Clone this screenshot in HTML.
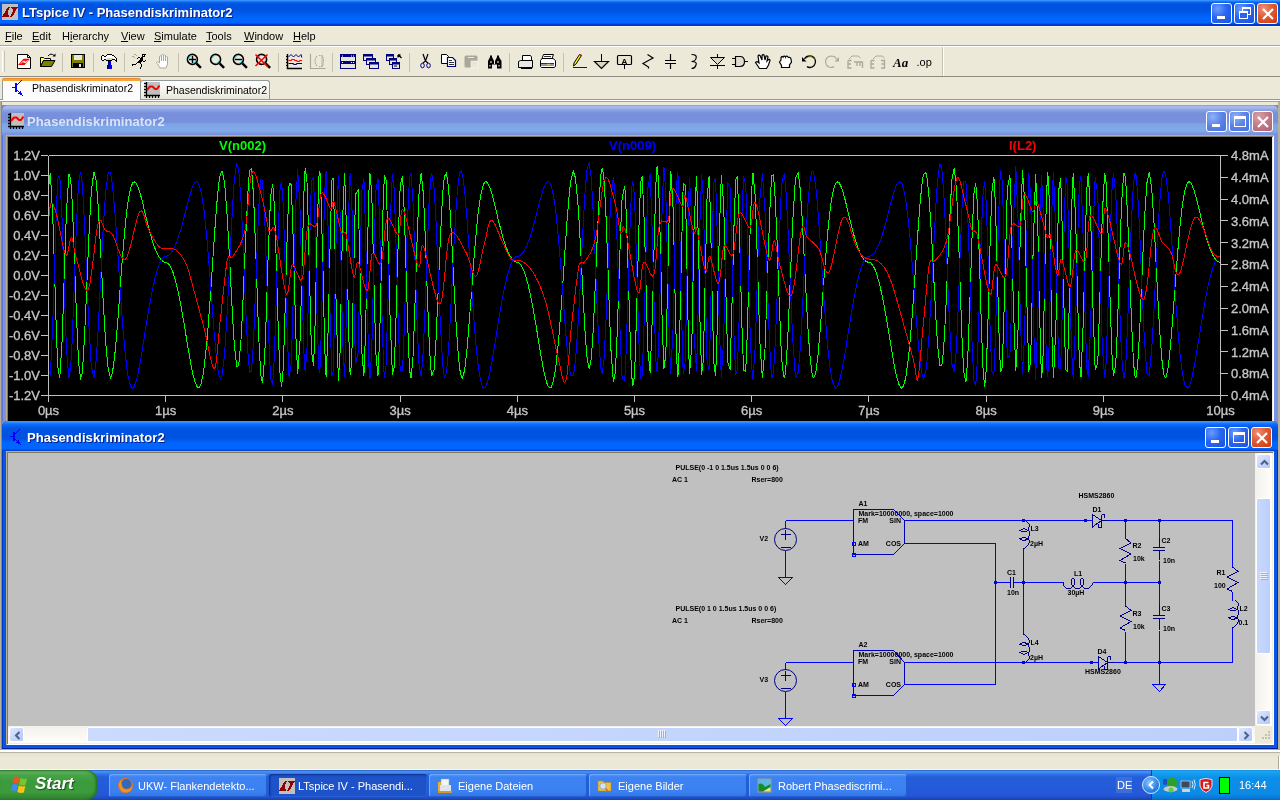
<!DOCTYPE html>
<html><head><meta charset="utf-8">
<style>
*{margin:0;padding:0;box-sizing:border-box}
html,body{width:1280px;height:800px;overflow:hidden;background:#ECE9D8;font-family:"Liberation Sans",sans-serif;position:relative}
body{will-change:transform}
.a{position:absolute}
#title{left:0;top:0;width:1280px;height:26px;background:linear-gradient(180deg,#4396ff 0px,#2a8aff 1px,#0a68f0 2px,#0053e0 4px,#0053e0 10px,#005cf0 14px,#0066ff 18px,#0066ff 23px,#0040d8 24px,#0033cc 25px)}
#title .t{left:22px;top:5px;color:#fff;font-weight:bold;font-size:13px;text-shadow:1px 1px 0 #0a1e80;white-space:nowrap}
.xb{width:21px;height:21px;border:1px solid #fff;border-radius:3px;background:radial-gradient(circle at 30% 25%,#6c9cff 0%,#2a66f0 45%,#1a50e0 100%)}
.xb.c{background:radial-gradient(circle at 30% 25%,#f09080 0%,#e05a30 45%,#c83a10 100%)}
#menu{left:0;top:26px;width:1280px;height:20px;background:#ECE9D8;border-top:1px solid #faf6e6}
#menu span{position:absolute;top:3px;font-size:11px;color:#000;white-space:nowrap}
#menu u{text-decoration:underline}
.sep1{left:0;top:45px;width:1280px;height:1px;background:#aca899}
.sep2{left:0;top:46px;width:1280px;height:1px;background:#fff}
#tb{left:0;top:47px;width:1280px;height:30px;background:#ECE9D8}
.tbsep{top:6px;width:1px;height:19px;background:#c5c2b2}
#tabs{left:0;top:77px;width:1280px;height:25px;background:#ECE9D8;border-top:1px solid #8c8a80}
.xbi{position:absolute;width:21px;height:21px;border:1px solid #fff;border-radius:3px;background:radial-gradient(circle at 30% 25%,#8fb0f8 0%,#5a82e8 50%,#4a70dc 100%)}
.xbi.c{background:radial-gradient(circle at 30% 25%,#d9a0a8 0%,#c07884 50%,#b06070 100%)}
.sbtn{position:absolute;width:15px;height:15px;border:1px solid #fff;border-radius:2px;background:linear-gradient(135deg,#e0e8fe,#c3d3fd 60%,#b4c8f8)}
.sthumb{position:absolute;border:1px solid #fff;border-radius:2px;background:linear-gradient(90deg,#cbdafd,#bdd0fb)}
.tbtn{position:absolute;top:4px;width:158px;height:23px;border-radius:3px;background:linear-gradient(180deg,#5a9af8 0px,#3d83f3 3px,#3a80f0 18px,#3472e0 23px);box-shadow:inset 1px 1px 0 #6ea8ff,inset -1px -1px 0 #2060d0}
.tbtn.act{background:#1e52c8;box-shadow:inset 1px 1px 2px #0d2e88,inset -1px -1px 0 #2a62d8}
.tt{left:29px;top:6px;font-size:11px;color:#fff;white-space:nowrap}
.mdi{left:0;top:102px;width:1280px;height:648px;background:#ECE9D8}
</style></head><body>

<!-- main title bar -->
<div id="title" class="a">
 <svg class="a" style="left:2px;top:4px" width="16" height="16" viewBox="0 0 16 16" shape-rendering="crispEdges"><rect width="16" height="16" fill="#c0c0c0"/><rect x="6" y="3" width="2" height="1" fill="#900000"/><rect x="9" y="3" width="7" height="1" fill="#900000"/><rect x="5" y="4" width="2" height="1" fill="#900000"/><rect x="10" y="4" width="5" height="1" fill="#900000"/><rect x="4" y="5" width="3" height="1" fill="#900000"/><rect x="11" y="5" width="3" height="1" fill="#900000"/><rect x="4" y="6" width="2" height="1" fill="#900000"/><rect x="11" y="6" width="3" height="1" fill="#900000"/><rect x="3" y="7" width="3" height="1" fill="#900000"/><rect x="11" y="7" width="2" height="1" fill="#900000"/><rect x="3" y="8" width="3" height="1" fill="#900000"/><rect x="10" y="8" width="3" height="1" fill="#900000"/><rect x="2" y="9" width="4" height="1" fill="#900000"/><rect x="10" y="9" width="2" height="1" fill="#900000"/><rect x="1" y="10" width="5" height="1" fill="#900000"/><rect x="9" y="10" width="3" height="1" fill="#900000"/><rect x="1" y="11" width="6" height="1" fill="#900000"/><rect x="9" y="11" width="2" height="1" fill="#900000"/><rect x="0" y="12" width="7" height="1" fill="#900000"/><rect x="8" y="12" width="2" height="1" fill="#900000"/></svg>
 <div class="a t">LTspice IV - Phasendiskriminator2</div>
 <div class="a xb" style="left:1211px;top:3px"><div class="a" style="left:5px;top:12px;width:8px;height:3px;background:#fff"></div></div>
 <div class="a xb" style="left:1234px;top:3px"><div class="a" style="left:7px;top:3px;width:9px;height:8px;border:1px solid #fff;border-top-width:2px"></div><div class="a" style="left:4px;top:7px;width:9px;height:8px;border:1px solid #fff;border-top-width:2px;background:#2a62ee"></div></div>
 <div class="a xb c" style="left:1257px;top:3px"><svg class="a" style="left:4px;top:4px" width="12" height="12"><path d="M1 1 L11 11 M11 1 L1 11" stroke="#fff" stroke-width="2.2"/></svg></div>
</div>

<div id="menu" class="a">
 <span style="left:5px"><u>F</u>ile</span>
 <span style="left:32px"><u>E</u>dit</span>
 <span style="left:62px">H<u>i</u>erarchy</span>
 <span style="left:121px"><u>V</u>iew</span>
 <span style="left:154px"><u>S</u>imulate</span>
 <span style="left:206px"><u>T</u>ools</span>
 <span style="left:244px"><u>W</u>indow</span>
 <span style="left:293px"><u>H</u>elp</span>
</div>
<div class="a sep1"></div><div class="a sep2"></div>


<div id="tb" class="a">
 <div class="a" style="left:2px;top:4px;width:3px;height:21px;border-left:1px solid #fff;border-right:1px solid #c5c2b2;background:#f2f0e6"></div>
 <div class="a tbsep" style="left:62px"></div>
 <div class="a tbsep" style="left:93px"></div>
 <div class="a tbsep" style="left:124px"></div>
 <div class="a tbsep" style="left:178px"></div>
 <div class="a tbsep" style="left:278px"></div>
 <div class="a tbsep" style="left:332px"></div>
 <div class="a tbsep" style="left:409px"></div>
 <div class="a tbsep" style="left:509px"></div>
 <div class="a tbsep" style="left:563px"></div>
 <div class="a" style="left:942px;top:0;width:2px;height:29px;border-left:1px solid #c5c2b2;border-right:1px solid #fff"></div>
 
</div>
<div class="a" style="left:0;top:76px;width:1280px;height:1px;background:#8e8c7e"></div>
<!--ICONS-->
<svg class="a" style="left:0;top:0" width="945" height="77" viewBox="0 0 945 77"><path d="M17.5 54.5 H27.5 L30.5 57.5 V68.5 H17.5 Z" fill="#fff" stroke="#000"/>
<path d="M27.5 54.5 V57.5 H30.5" fill="none" stroke="#000"/>
<path d="M18 65 L23.5 58.7 H30 L24.5 65 Z" fill="#f00"/>
<path d="M21 63.5 L23 61.3 H25.5 M23.5 62.3 H26 L27.5 60.3" stroke="#fff" stroke-width="1" fill="none"/>
<path d="M40.5 57.5 H43.5 L44.5 58.5 H50.5 V60.5 H43.5 L40.5 66.5 Z" fill="#ffff60" stroke="#000"/>
<path d="M40.5 66.5 L43.5 60.5 H55 L51.5 66.5 Z" fill="#808000" stroke="#000"/>
<path d="M48 56 Q51 52.5 54 55.5" fill="none" stroke="#000"/><path d="M52.5 56.5 H55.5 V53.5 Z" fill="#000"/>
<rect x="71.5" y="54.5" width="13" height="13" fill="#808000" stroke="#000"/>
<rect x="74" y="55" width="8" height="5" fill="#e8e8d8"/>
<rect x="73" y="63" width="10" height="5" fill="#000"/><rect x="79" y="64" width="2" height="3" fill="#e8e8d8"/>
<rect x="107" y="54" width="5" height="1" fill="#000"/>
<rect x="102" y="55" width="2" height="1" fill="#000"/>
<rect x="106" y="55" width="1" height="1" fill="#000"/>
<rect x="107" y="55" width="5" height="1" fill="#fff"/>
<rect x="112" y="55" width="2" height="1" fill="#000"/>
<rect x="101" y="56" width="1" height="1" fill="#000"/>
<rect x="102" y="56" width="2" height="1" fill="#fff"/>
<rect x="104" y="56" width="2" height="1" fill="#000"/>
<rect x="106" y="56" width="8" height="1" fill="#fff"/>
<rect x="114" y="56" width="1" height="1" fill="#000"/>
<rect x="101" y="57" width="1" height="1" fill="#000"/>
<rect x="102" y="57" width="13" height="1" fill="#fff"/>
<rect x="115" y="57" width="1" height="1" fill="#000"/>
<rect x="101" y="58" width="1" height="1" fill="#000"/>
<rect x="102" y="58" width="5" height="1" fill="#fff"/>
<rect x="107" y="58" width="6" height="1" fill="#d8d4c8"/>
<rect x="113" y="58" width="3" height="1" fill="#fff"/>
<rect x="116" y="58" width="1" height="1" fill="#000"/>
<rect x="101" y="59" width="1" height="1" fill="#000"/>
<rect x="102" y="59" width="2" height="1" fill="#fff"/>
<rect x="104" y="59" width="2" height="1" fill="#000"/>
<rect x="106" y="59" width="6" height="1" fill="#d8d4c8"/>
<rect x="112" y="59" width="3" height="1" fill="#000"/>
<rect x="115" y="59" width="1" height="1" fill="#fff"/>
<rect x="116" y="59" width="1" height="1" fill="#000"/>
<rect x="102" y="60" width="2" height="1" fill="#000"/>
<rect x="106" y="60" width="6" height="1" fill="#000"/>
<rect x="115" y="60" width="2" height="1" fill="#000"/>
<rect x="108" y="61" width="2" height="1" fill="#000080"/>
<rect x="110" y="61" width="1" height="1" fill="#0000ff"/>
<rect x="116" y="61" width="1" height="1" fill="#000"/>
<rect x="108" y="62" width="2" height="1" fill="#000080"/>
<rect x="110" y="62" width="1" height="1" fill="#0000ff"/>
<rect x="108" y="63" width="2" height="1" fill="#000080"/>
<rect x="110" y="63" width="1" height="1" fill="#0000ff"/>
<rect x="108" y="64" width="2" height="1" fill="#000080"/>
<rect x="110" y="64" width="1" height="1" fill="#0000ff"/>
<rect x="107" y="65" width="2" height="1" fill="#000080"/>
<rect x="109" y="65" width="3" height="1" fill="#0000ff"/>
<rect x="107" y="66" width="2" height="1" fill="#000080"/>
<rect x="109" y="66" width="3" height="1" fill="#0000ff"/>
<rect x="107" y="67" width="2" height="1" fill="#000080"/>
<rect x="109" y="67" width="3" height="1" fill="#0000ff"/>
<rect x="107" y="68" width="2" height="1" fill="#000080"/>
<rect x="109" y="68" width="3" height="1" fill="#0000ff"/>
<rect x="134" y="54" width="2" height="1" fill="#a8a498"/>
<rect x="142" y="54" width="4" height="1" fill="#000"/>
<rect x="136" y="55" width="1" height="1" fill="#a8a498"/>
<rect x="142" y="55" width="1" height="1" fill="#000"/>
<rect x="143" y="55" width="1" height="1" fill="#fff"/>
<rect x="144" y="55" width="1" height="1" fill="#000"/>
<rect x="132" y="56" width="2" height="1" fill="#a8a498"/>
<rect x="142" y="56" width="3" height="1" fill="#000"/>
<rect x="134" y="57" width="1" height="1" fill="#a8a498"/>
<rect x="138" y="57" width="2" height="1" fill="#000"/>
<rect x="141" y="57" width="2" height="1" fill="#000"/>
<rect x="137" y="58" width="1" height="1" fill="#000"/>
<rect x="140" y="58" width="3" height="1" fill="#000"/>
<rect x="140" y="59" width="3" height="1" fill="#000"/>
<rect x="139" y="60" width="4" height="1" fill="#000"/>
<rect x="145" y="60" width="1" height="1" fill="#000"/>
<rect x="138" y="61" width="4" height="1" fill="#000"/>
<rect x="143" y="61" width="2" height="1" fill="#000"/>
<rect x="137" y="62" width="4" height="1" fill="#000"/>
<rect x="136" y="63" width="1" height="1" fill="#000"/>
<rect x="140" y="63" width="1" height="1" fill="#000"/>
<rect x="132" y="64" width="4" height="1" fill="#000"/>
<rect x="141" y="64" width="1" height="1" fill="#000"/>
<rect x="132" y="65" width="1" height="1" fill="#000"/>
<rect x="141" y="65" width="1" height="1" fill="#000"/>
<rect x="141" y="66" width="1" height="1" fill="#000"/>
<rect x="140" y="67" width="1" height="1" fill="#000"/>
<rect x="140" y="68" width="1" height="1" fill="#000"/>
<path d="M160 68 L156.5 62.5 L157.5 61.5 L159.5 63 V56.5 Q160.5 55.5 161.5 56.5 V61 V55 Q162.5 54 163.5 55 V61 V55.5 Q164.5 54.5 165.5 55.5 V61 V57 Q166.5 56 167.5 57 V64 L166 68 Z" fill="#fff" stroke="#aca899"/>
<circle cx="192.4" cy="59.4" r="5" fill="none" stroke="#000" stroke-width="1.6"/>
<path d="M188.9 58.4 Q189.4 55.9 191.9 55.4 M195.9 60.4 Q195.4 62.9 192.9 63.4" stroke="#00e0ff" stroke-width="1" fill="none"/>
<path d="M196.4 63.4 L200.9 67.9" stroke="#000" stroke-width="2.4"/>
<path d="M189 59.5 H196 M192.5 56 V63" stroke="#000" stroke-width="1.4"/>
<circle cx="215.6" cy="59.4" r="5" fill="none" stroke="#000" stroke-width="1.6"/>
<path d="M212.1 58.4 Q212.6 55.9 215.1 55.4 M219.1 60.4 Q218.6 62.9 216.1 63.4" stroke="#00e0ff" stroke-width="1" fill="none"/>
<path d="M219.6 63.4 L224.1 67.9" stroke="#000" stroke-width="2.4"/>

<circle cx="238.4" cy="59.4" r="5" fill="none" stroke="#000" stroke-width="1.6"/>
<path d="M234.9 58.4 Q235.4 55.9 237.9 55.4 M241.9 60.4 Q241.4 62.9 238.9 63.4" stroke="#00e0ff" stroke-width="1" fill="none"/>
<path d="M242.4 63.4 L246.9 67.9" stroke="#000" stroke-width="2.4"/>
<path d="M235 59.5 H242" stroke="#000" stroke-width="1.4"/>
<circle cx="261.6" cy="59.4" r="5" fill="none" stroke="#000" stroke-width="1.6"/>
<path d="M258.1 58.4 Q258.6 55.9 261.1 55.4 M265.1 60.4 Q264.6 62.9 262.1 63.4" stroke="#00e0ff" stroke-width="1" fill="none"/>
<path d="M265.6 63.4 L270.1 67.9" stroke="#000" stroke-width="2.4"/>
<path d="M255.5 54.5 L268 67 M267.5 54.5 L255.5 66" stroke="#f00" stroke-width="1.6"/>
<path d="M287.5 54 V68.5 H302" fill="none" stroke="#000" stroke-width="1.5"/>
<path d="M286 56.5 H287 M286 59.5 H287 M286 62.5 H287 M286 65.5 H287 M290 68 V69 M293 68 V69 M296 68 V69 M299 68 V69" stroke="#000" stroke-width="1"/>
<path d="M288.5 57 L291 54.5 L293.5 57 L296 54.5 L298.5 57 L301 54.5 L301.8 57.5" fill="none" stroke="#000080" stroke-width="1"/>
<path d="M288.5 60.5 H291 L292 59.5 H294 L295 60.5 H296.5 L297.5 61.5 H299 L300 60.5 H302" fill="none" stroke="#f00" stroke-width="1.2"/>
<path d="M288.5 63.5 H293 L294 64.5 H296 L297 63.5 H302" fill="none" stroke="#000080" stroke-width="1.2"/>
<path d="M310.5 54 V68.5 H325.5" fill="none" stroke="#aca899" stroke-width="1.2"/>
<path d="M317 56 Q313 61 317 66 M319 55.5 H322 Q325 61 322 66.5 H319 M322 55.5 V66.5" fill="none" stroke="#aca899" stroke-width="1.2" stroke-dasharray="1.5 0.8"/>
<rect x="340.5" y="54.5" width="15" height="14" fill="#e8e6d8" stroke="#000080"/>
<rect x="341" y="55" width="14" height="2" fill="#000080"/><rect x="341" y="61" width="14" height="3" fill="#000080"/>
<path d="M342 56 h1 M351 56 h1 M353 56 h1 M342 62.5 h1 M351 62.5 h1 M353 62.5 h1" stroke="#fff" stroke-width="1"/>
<rect x="363.5" y="54.5" width="9" height="6" fill="#e8e6d8" stroke="#000080"/><rect x="363.5" y="54.5" width="9" height="2" fill="#000080"/>
<rect x="366.5" y="58.5" width="9" height="6" fill="#e8e6d8" stroke="#000080"/><rect x="366.5" y="58.5" width="9" height="2" fill="#000080"/>
<rect x="369.5" y="62.5" width="9" height="6" fill="#e8e6d8" stroke="#000080"/><rect x="369.5" y="62.5" width="9" height="2" fill="#000080"/>
<rect x="386.5" y="54.5" width="7" height="6" fill="#e8e6d8" stroke="#000080"/><rect x="386.5" y="54.5" width="7" height="2" fill="#000080"/>
<rect x="389.5" y="58.5" width="7" height="6" fill="#e8e6d8" stroke="#000080"/><rect x="389.5" y="58.5" width="7" height="2" fill="#000080"/>
<rect x="392.5" y="62.5" width="7" height="6" fill="#e8e6d8" stroke="#000080"/><rect x="392.5" y="62.5" width="7" height="2" fill="#000080"/>
<path d="M394 66 H397" stroke="#000" stroke-width="1"/><path d="M398.5 55 L401.5 58 M398 55 H400.5 M398 55 V57.5" stroke="#000" stroke-width="1.3"/>
<path d="M423 54 L425.5 61 M428 54 L425.5 61 L423 63 M425.5 61 L428 63" stroke="#000" stroke-width="1.2" fill="none"/>
<ellipse cx="422.5" cy="65.5" rx="1.8" ry="2.3" fill="none" stroke="#000080" stroke-width="1"/><ellipse cx="428.5" cy="65.5" rx="1.8" ry="2.3" fill="none" stroke="#000080" stroke-width="1"/>
<path d="M441.5 54.5 H446.5 L448.5 56.5 V63.5 H441.5 Z" fill="#fff" stroke="#000"/>
<path d="M447.5 57.5 H452.5 L455.5 60.5 V66.5 H447.5 Z" fill="#fff" stroke="#000080" stroke-width="1.2"/>
<path d="M449 60.5 H452 M449 62.5 H454 M449 64.5 H454" stroke="#000" stroke-width="0.8"/>
<rect x="464.5" y="55.5" width="13" height="12" rx="1.5" fill="#aca899"/><rect x="471" y="61" width="7" height="7" fill="#e8e6d8" stroke="#fff" stroke-width="0.5"/><rect x="468" y="57" width="6" height="1" fill="#e8e6d8"/>
<path d="M488 68.5 V61 L490 57 V55.5 H492 V57 L494 61 V64 H495 V61 L497 57 V55.5 H499 V57 L501.5 61 V68.5 H497 V64.5 H492 V68.5 Z" fill="#000"/>
<rect x="490.5" y="61" width="1" height="2" fill="#fff"/><rect x="497.5" y="61" width="1" height="2" fill="#fff"/><rect x="489.5" y="65" width="1" height="1.5" fill="#fff"/><rect x="498.5" y="65" width="1" height="1.5" fill="#fff"/>
<path d="M522.5 55.5 H530.5 L531.5 57 V60.5 H522.5 Z" fill="#fff" stroke="#000"/>
<path d="M518.5 61.5 L520.5 60.5 H532.5 V67.5 H518.5 Z" fill="#e8e8e8" stroke="#000"/><rect x="521" y="68" width="11" height="1" fill="#000"/>
<path d="M543.5 54.5 H553.5 L552 58.5 H542 Z" fill="#fff" stroke="#000"/><path d="M544 56.5 H551" stroke="#000" stroke-width="0.8"/>
<path d="M540.5 60.5 L542 58.5 H553 L555.5 60.5 V66.5 L554 67.5 H541.5 L540.5 66.5 Z" fill="#fff" stroke="#000"/><path d="M541 63.5 H554 M541 65 H554" stroke="#000" stroke-width="0.8"/><rect x="547" y="63.8" width="3" height="1" fill="#e0e000"/>
<path d="M573.5 66 L574 63 L579.5 54.5 L581.5 55.5 L576 64 Z" fill="#ffff00" stroke="#000" stroke-width="1"/><rect x="580" y="54.5" width="1.5" height="1.5" fill="#f00"/>
<path d="M573 67.5 H587" stroke="#0000ff" stroke-width="1"/>
<path d="M601.5 54 V61" stroke="#000" stroke-width="1"/><path d="M594.5 61.5 H608.5 L601.5 68.5 Z" fill="#d8d8c0" stroke="#000" stroke-width="1.2"/>
<rect x="617.5" y="55.5" width="14" height="9" rx="1" fill="#e8e6d0" stroke="#000" stroke-width="1.2"/><path d="M624.5 64.5 V69" stroke="#000"/>
<text x="624.5" y="63.5" font-family="Liberation Sans" font-size="8" font-weight="bold" text-anchor="middle">A</text>
<path d="M647.5 54.5 L653 58 L643 63.5 L648.5 67 V68.5" fill="none" stroke="#000" stroke-width="1.2"/>
<path d="M670.5 54 V60 M670.5 63.5 V69 M665 60.5 H676 M665 63.5 H676" stroke="#000" stroke-width="1.2"/>
<path d="M691.5 54.5 Q697.5 54.5 696 58.5 Q695.5 61 691.5 61.5 Q697.5 61.5 696 65 Q695 68.5 691.5 68.5" fill="none" stroke="#000" stroke-width="1.2"/>
<path d="M717.5 54 V57.5 M717.5 65 V69 M710 65.5 H725" stroke="#000" stroke-width="1"/><path d="M710.5 57.5 H724.5 L717.5 64.5 Z" fill="#d8d8c8" stroke="#000" stroke-width="1"/>
<path d="M735.5 56.5 H740 Q744.5 56.5 744.5 61.5 Q744.5 66.5 740 66.5 H735.5 Z" fill="#e0ddd0" stroke="#000" stroke-width="1.2"/><path d="M732 58.5 H735.5 M732 64.5 H735.5 M744.5 61.5 H748" stroke="#000" stroke-width="1"/>
<path d="M759.5 68.5 L755.5 62.5 L757 61.5 L759 63 L758 56 Q759 54.5 760 55.5 L762 60 V55.5 Q763 54 764 55 L765 60 L766 56 Q767.5 55.5 768 57 L767 61 L768.5 59.5 Q770 59 770 60.5 L768.5 65 L766.5 68.5 Z" fill="#fff" stroke="#000" stroke-width="1.2"/>
<path d="M781.5 67.5 V65.5 L779.5 62 L781 60 V57.5 Q782 56 783 57 V56.5 Q784.5 55.5 785.5 57 V56.5 Q787 55.5 788 57 L789 57.5 Q790.5 57 791 59 L791.5 62 L789.5 65 V67.5 Z" fill="#fff" stroke="#000" stroke-width="1.2"/>
<path d="M804.5 59 Q806 56 810 56 Q815 56.5 815.5 61.5 Q815 67 810 67.5 Q808 67.5 807 66.5" fill="none" stroke="#000" stroke-width="1.3"/><path d="M806.5 58 Q808 56.5 811 56.5 Q814 57.5 815 60" fill="none" stroke="#808000" stroke-width="1"/><path d="M802 57 V61.5 H806.5 Z" fill="#000"/>
<path d="M836.5 59 Q835 56 831 56 Q826 56.5 825.5 61.5 Q826 67 831 67.5 Q833 67.5 834 66.5" fill="none" stroke="#aca899" stroke-width="1.2"/><path d="M839 57 V61.5 H834.5 Z" fill="#aca899"/>
<path d="M849 59 L852 56 H858 L860.5 58" fill="none" stroke="#aca899"/><path d="M848 60.5 V68 H851.5 M848 64 H851 M848 60.5 H851.5 M854 62 H862.5 V68 M857 62 V66 M860 62 V66" fill="none" stroke="#aca899" stroke-width="1.3"/>
<path d="M873 59 L876 56 H882 L884.5 58" fill="none" stroke="#aca899"/><path d="M871 60.5 V68 H874.5 M871 64 H874 M871 60.5 H874.5 M881 60.5 H884.5 V68 H881 M881.5 64 H884.5" fill="none" stroke="#aca899" stroke-width="1.3"/>
<text x="893" y="66.8" font-family="Liberation Serif" font-size="13" font-weight="bold" font-style="italic">Aa</text>
<text x="916.5" y="66" font-family="Liberation Sans" font-size="11">.op</text></svg>
<!--/ICONS-->

<div id="tabs" class="a" style="border:none">
 
 <div class="a" style="left:140px;top:3px;width:130px;height:20px;border:1px solid #919b9c;border-bottom:none;border-radius:3px 3px 0 0;background:linear-gradient(#fff,#f0efe6 70%,#e6e4d8)"></div>
 <div class="a" style="left:2px;top:1px;width:139px;height:23px;border:1px solid #919b9c;border-bottom:none;border-top:none;border-radius:3px 3px 0 0;background:#fcfcfe"></div>
 <div class="a" style="left:2px;top:1px;width:139px;height:3px;background:#f5a635;border-radius:3px 3px 0 0;border-top:1px solid #e68b2c"></div>
 <div class="a" style="left:0;top:22px;width:1280px;height:1px;background:#919b9c"></div>
 <div class="a" style="left:3px;top:4px;width:137px;height:19px;background:#fcfcfe"></div>
 <div class="a" style="left:0;top:23px;width:1280px;height:1px;background:#fff"></div>
 <div class="a" style="left:0;top:24px;width:1280px;height:1px;background:#a0a0a0"></div>
 <svg class="a" style="left:12px;top:3px" width="11" height="16" shape-rendering="crispEdges"><rect x="9" y="0" width="1" height="1" fill="#0000ff"/><rect x="8" y="1" width="1" height="1" fill="#0000ff"/><rect x="7" y="2" width="1" height="1" fill="#0000ff"/><rect x="3" y="3" width="2" height="1" fill="#0000ff"/><rect x="6" y="3" width="1" height="1" fill="#0000ff"/><rect x="3" y="4" width="3" height="1" fill="#0000ff"/><rect x="3" y="5" width="2" height="1" fill="#0000ff"/><rect x="3" y="6" width="2" height="1" fill="#0000ff"/><rect x="0" y="7" width="5" height="1" fill="#0000ff"/><rect x="3" y="8" width="2" height="1" fill="#0000ff"/><rect x="3" y="9" width="2" height="1" fill="#0000ff"/><rect x="3" y="10" width="3" height="1" fill="#0000ff"/><rect x="3" y="11" width="2" height="1" fill="#0000ff"/><rect x="6" y="11" width="1" height="1" fill="#0000ff"/><rect x="8" y="11" width="1" height="1" fill="#0000ff"/><rect x="7" y="12" width="2" height="1" fill="#0000ff"/><rect x="6" y="13" width="4" height="1" fill="#0000ff"/><rect x="8" y="14" width="2" height="1" fill="#0000ff"/><rect x="10" y="15" width="1" height="1" fill="#0000ff"/></svg>
 <span class="a" style="left:32px;top:5px;font-size:10.5px;color:#000;white-space:nowrap">Phasendiskriminator2</span>
 <svg class="a" style="left:144px;top:5px" width="16" height="16" viewBox="0 0 16 16"><rect x="3" y="0" width="13" height="13" fill="#c0c0c0"/><path d="M2.5 0 V16 M0 13.5 H16 M0 1.5 H2.5 M0 4.5 H2.5 M0 7.5 H2.5 M0 10.5 H2.5 M5.5 13.5 V16 M8.5 13.5 V16 M11.5 13.5 V16 M14.5 13.5 V16" stroke="#000" stroke-width="1.3" fill="none"/><path d="M3 8 L6 4.5 H8.5 L11 7 H13 L15.5 3.5" stroke="#f00" stroke-width="2" fill="none" stroke-linejoin="round"/></svg>
 <span class="a" style="left:166px;top:7px;font-size:10.5px;color:#000;white-space:nowrap">Phasendiskriminator2</span>
</div>

<div class="a" style="left:0;top:105px;width:1280px;height:644px;background:#7f8aa8"></div>
<div class="a" style="left:0;top:102px;width:2px;height:648px;background:#b4b09c;border-right:1px solid #8c8876"></div>
<div class="a" style="left:1278px;top:102px;width:2px;height:648px;background:#b4b09c"></div>

<!-- plot window (inactive) -->
<div class="a" style="left:2px;top:105px;width:1276px;height:316px;background:#7b92e2;border-radius:6px 6px 0 0;border-left:1px solid #6070dc"></div>
<div class="a" style="left:2px;top:105px;width:1276px;height:30px;border-radius:6px 6px 0 0;background:linear-gradient(180deg,#6c8ce4 0px,#a4baec 1px,#a2b8ec 3px,#8aa2e2 5px,#7890dc 8px,#7890dc 17px,#7ea2e6 19px,#82aaea 26px,#7a98e2 28px,#7890e0 30px)"></div>
<svg class="a" style="left:8px;top:113px" width="16" height="16" viewBox="0 0 16 16"><rect x="3" y="0" width="13" height="13" fill="#c0c0c0"/><path d="M2.5 0 V16 M0 13.5 H16 M0 1.5 H2.5 M0 4.5 H2.5 M0 7.5 H2.5 M0 10.5 H2.5 M5.5 13.5 V16 M8.5 13.5 V16 M11.5 13.5 V16 M14.5 13.5 V16" stroke="#000" stroke-width="1.3" fill="none"/><path d="M3 8 L6 4.5 H8.5 L11 7 H13 L15.5 3.5" stroke="#f00" stroke-width="2" fill="none" stroke-linejoin="round"/></svg>
<span class="a" style="left:27px;top:114px;font-size:13px;font-weight:bold;color:#d8e4f8;white-space:nowrap;letter-spacing:0.1px">Phasendiskriminator2</span>
<div class="a xbi" style="left:1206px;top:111px"><div class="a" style="left:5px;top:12px;width:8px;height:3px;background:#fff"></div></div>
<div class="a xbi" style="left:1229px;top:111px"><div class="a" style="left:4px;top:4px;width:12px;height:11px;border:1px solid #fff;border-top-width:3px"></div></div>
<div class="a xbi c" style="left:1252px;top:111px"><svg class="a" style="left:4px;top:4px" width="12" height="12"><path d="M1 1 L11 11 M11 1 L1 11" stroke="#fff" stroke-width="2.2"/></svg></div>
<div class="a" style="left:6px;top:135px;width:1268px;height:290px;background:#fff;border-left:1px solid #b8b090;border-top:1px solid #b8b090"></div>
<div class="a" style="left:7px;top:136px;width:1266px;height:290px;background:#f0eee0;border-left:1px solid #807860;border-top:1px solid #807860"></div>
<div class="a" id="plot" style="left:8px;top:137px;width:1264px;height:290px;background:#000"></div>

<!-- schematic window (active) -->
<div class="a" style="left:2px;top:421px;width:1276px;height:328px;background:#0a54e8;border-radius:6px 6px 0 0;border-left:1px solid #0038c8;border-right:1px solid #0030b0;border-bottom:1px solid #002090"></div>
<div class="a" style="left:2px;top:421px;width:1276px;height:30px;border-radius:6px 6px 0 0;background:linear-gradient(180deg,#3d95ff 0px,#3d95ff 1px,#1a7cff 2px,#0a66f8 4px,#0058e8 7px,#0053e0 10px,#0053e0 18px,#005ef4 20px,#0066ff 22px,#0066ff 28px,#0048d8 29px,#0040c8 30px)"></div>
<svg class="a" style="left:10px;top:429px" width="11" height="16" shape-rendering="crispEdges"><rect x="9" y="0" width="1" height="1" fill="#0000ff"/><rect x="8" y="1" width="1" height="1" fill="#0000ff"/><rect x="7" y="2" width="1" height="1" fill="#0000ff"/><rect x="3" y="3" width="2" height="1" fill="#0000ff"/><rect x="6" y="3" width="1" height="1" fill="#0000ff"/><rect x="3" y="4" width="3" height="1" fill="#0000ff"/><rect x="3" y="5" width="2" height="1" fill="#0000ff"/><rect x="3" y="6" width="2" height="1" fill="#0000ff"/><rect x="0" y="7" width="5" height="1" fill="#0000ff"/><rect x="3" y="8" width="2" height="1" fill="#0000ff"/><rect x="3" y="9" width="2" height="1" fill="#0000ff"/><rect x="3" y="10" width="3" height="1" fill="#0000ff"/><rect x="3" y="11" width="2" height="1" fill="#0000ff"/><rect x="6" y="11" width="1" height="1" fill="#0000ff"/><rect x="8" y="11" width="1" height="1" fill="#0000ff"/><rect x="7" y="12" width="2" height="1" fill="#0000ff"/><rect x="6" y="13" width="4" height="1" fill="#0000ff"/><rect x="8" y="14" width="2" height="1" fill="#0000ff"/><rect x="10" y="15" width="1" height="1" fill="#0000ff"/></svg>
<span class="a" style="left:27px;top:430px;font-size:13px;font-weight:bold;color:#fff;text-shadow:1px 1px 0 #0a1e80;white-space:nowrap;letter-spacing:0.1px">Phasendiskriminator2</span>
<div class="a xb" style="left:1205px;top:427px"><div class="a" style="left:5px;top:12px;width:8px;height:3px;background:#fff"></div></div>
<div class="a xb" style="left:1228px;top:427px"><div class="a" style="left:4px;top:4px;width:12px;height:11px;border:1px solid #fff;border-top-width:3px"></div></div>
<div class="a xb c" style="left:1251px;top:427px"><svg class="a" style="left:4px;top:4px" width="12" height="12"><path d="M1 1 L11 11 M11 1 L1 11" stroke="#fff" stroke-width="2.2"/></svg></div>
<div class="a" style="left:6px;top:451px;width:1268px;height:294px;background:#fff;border-left:1px solid #b8b090;border-top:1px solid #b8b090"></div>
<div class="a" style="left:7px;top:452px;width:1266px;height:292px;background:#f1efe2;border-left:1px solid #807860;border-top:1px solid #807860"></div>
<div class="a" id="sch" style="left:8px;top:453px;width:1247px;height:273px;background:#c0c0c0"></div>
<!-- vscroll -->
<div class="a" style="left:1255px;top:453px;width:17px;height:273px;background:linear-gradient(90deg,#f3f1ec,#fefefb)"></div>
<div class="a sbtn" style="left:1256px;top:454px"><svg class="a" style="left:3px;top:4px" width="9" height="7"><path d="M1 5.5 L4.5 2 L8 5.5" stroke="#4d6185" stroke-width="2" fill="none"/></svg></div>
<div class="a sthumb" style="left:1256px;top:498px;width:15px;height:156px;background:linear-gradient(90deg,#c8d8fc,#bcd0fc)"></div>
<svg class="a" style="left:1260px;top:572px" width="8" height="8"><path d="M0 0.5 H7 M0 2.5 H7 M0 4.5 H7 M0 6.5 H7" stroke="#eef4fe" stroke-width="1"/><path d="M1 1.5 H8 M1 3.5 H8 M1 5.5 H8 M1 7.5 H8" stroke="#8cb0f8" stroke-width="1"/></svg>
<div class="a sbtn" style="left:1256px;top:710px"><svg class="a" style="left:3px;top:4px" width="9" height="7"><path d="M1 1.5 L4.5 5 L8 1.5" stroke="#4d6185" stroke-width="2" fill="none"/></svg></div>
<!-- hscroll -->
<div class="a" style="left:8px;top:726px;width:1247px;height:17px;background:linear-gradient(180deg,#f3f1ec,#fefefb)"></div>
<div class="a sbtn" style="left:9px;top:727px"><svg class="a" style="left:4px;top:3px" width="7" height="9"><path d="M5.5 1 L2 4.5 L5.5 8" stroke="#4d6185" stroke-width="2" fill="none"/></svg></div>
<div class="a sthumb" style="left:87px;top:727px;width:1151px;height:15px"></div>
<svg class="a" style="left:658px;top:730px" width="8" height="9"><path d="M0.5 0 V7 M2.5 0 V7 M4.5 0 V7 M6.5 0 V7" stroke="#eef4fe" stroke-width="1"/><path d="M1.5 1 V8 M3.5 1 V8 M5.5 1 V8 M7.5 1 V8" stroke="#8cb0f8" stroke-width="1"/></svg>
<div class="a sbtn" style="left:1238px;top:727px"><svg class="a" style="left:4px;top:3px" width="7" height="9"><path d="M1.5 1 L5 4.5 L1.5 8" stroke="#4d6185" stroke-width="2" fill="none"/></svg></div>
<div class="a" style="left:1255px;top:726px;width:17px;height:17px;background:#ece9d8"></div>
<svg class="a" style="left:1259px;top:730px" width="12" height="12"><path d="M9 1h2v2h-2zM6 4h2v2h-2zM9 4h2v2h-2zM3 7h2v2h-2zM6 7h2v2h-2zM9 7h2v2h-2z" fill="#c5c2b2"/></svg>

<!-- status bar -->
<div class="a" style="left:0;top:749px;width:1280px;height:1px;background:#aca899"></div>
<div class="a" style="left:0;top:750px;width:1280px;height:2px;background:#fff"></div>
<div class="a" style="left:0;top:752px;width:1280px;height:1px;background:#b8b4a2"></div>
<div class="a" style="left:0;top:753px;width:1280px;height:16px;background:linear-gradient(180deg,#e6e3d4,#ece9d8 40%,#ebe8d6)"></div>
<div class="a" style="left:0;top:769px;width:1280px;height:1px;background:#faf6e8"></div>
<div class="a" style="left:1278px;top:756px;width:1px;height:13px;background:#aca899"></div>
<div class="a" style="left:1279px;top:756px;width:1px;height:13px;background:#fff"></div>

<!-- taskbar -->
<div class="a" id="task" style="left:0;top:770px;width:1280px;height:30px;background:linear-gradient(180deg,#1f4fc4 0px,#3d8aeb 1px,#4a92f0 2px,#2f74e8 4px,#245edb 7px,#2458d8 25px,#1e4cc8 28px,#1941a5 30px)">
 <div class="a" style="left:0;top:0;width:98px;height:30px;border-radius:0 12px 12px 0;background:linear-gradient(180deg,#3c8a3c 0px,#5fb05f 2px,#47a547 5px,#3b9a3b 12px,#3c9c3c 22px,#2f7f2f 30px);box-shadow:inset -2px 0 3px #236b23"></div>
 <svg class="a" style="left:10px;top:6px" width="20" height="18" viewBox="0 0 20 18">
  <path d="M4 1 Q6.5 0 9.5 1.5 L8 8 Q5 6.5 2.5 7.5 Z" fill="#f0541c"/>
  <path d="M10.5 2 Q13.5 3.5 17 2.5 L15.5 9 Q12.5 10 9 8.5 Z" fill="#7cc42c"/>
  <path d="M2.3 8.5 Q5 7.5 7.8 9 L6.3 15.5 Q3.5 14 1 15 Z" fill="#3f8cf0"/>
  <path d="M8.8 9.5 Q12 11 15.3 10 L13.8 16.5 Q10.5 17.5 7.3 16 Z" fill="#fcc414"/>
 </svg>
 <div class="a" style="left:35px;top:4px;font-size:17px;font-weight:bold;font-style:italic;color:#fff;text-shadow:1px 1px 1px #1a4a1a;white-space:nowrap">Start</div>
 <div class="a tbtn" style="left:109px"><svg class="a" style="left:8px;top:3px" width="17" height="17" viewBox="0 0 17 17"><circle cx="8.5" cy="8.5" r="7.5" fill="#e8731c"/><circle cx="9.5" cy="7" r="5" fill="#2f6bb8"/><path d="M2 9 Q3 15 9 15.5 Q15 15 15.5 9 Q13 13 9 12.5 Q5 12 4.5 7 Q3.5 5 5 2.5 Q1.5 5 2 9Z" fill="#f39020"/></svg><span class="a tt">UKW- Flankendetekto...</span></div>
 <div class="a tbtn act" style="left:269px"><svg class="a" style="left:10px;top:4px" width="16" height="16" viewBox="0 0 16 16" shape-rendering="crispEdges"><rect width="16" height="16" fill="#c0c0c0"/><rect x="6" y="3" width="2" height="1" fill="#900000"/><rect x="9" y="3" width="7" height="1" fill="#900000"/><rect x="5" y="4" width="2" height="1" fill="#900000"/><rect x="10" y="4" width="5" height="1" fill="#900000"/><rect x="4" y="5" width="3" height="1" fill="#900000"/><rect x="11" y="5" width="3" height="1" fill="#900000"/><rect x="4" y="6" width="2" height="1" fill="#900000"/><rect x="11" y="6" width="3" height="1" fill="#900000"/><rect x="3" y="7" width="3" height="1" fill="#900000"/><rect x="11" y="7" width="2" height="1" fill="#900000"/><rect x="3" y="8" width="3" height="1" fill="#900000"/><rect x="10" y="8" width="3" height="1" fill="#900000"/><rect x="2" y="9" width="4" height="1" fill="#900000"/><rect x="10" y="9" width="2" height="1" fill="#900000"/><rect x="1" y="10" width="5" height="1" fill="#900000"/><rect x="9" y="10" width="3" height="1" fill="#900000"/><rect x="1" y="11" width="6" height="1" fill="#900000"/><rect x="9" y="11" width="2" height="1" fill="#900000"/><rect x="0" y="12" width="7" height="1" fill="#900000"/><rect x="8" y="12" width="2" height="1" fill="#900000"/></svg><span class="a tt" style="left:29px">LTspice IV - Phasendi...</span></div>
 <div class="a tbtn" style="left:429px"><svg class="a" style="left:8px;top:4px" width="16" height="16" viewBox="0 0 16 16"><path d="M1 4 H5 V14 H1 Z" fill="#e8b030"/><rect x="4" y="1" width="8" height="7" fill="#f4f4f4" stroke="#8aa" stroke-width="0.5"/><rect x="3" y="7" width="11" height="6" fill="#dde4ee"/><path d="M1 13 H15 V15 H1 Z" fill="#d89820"/></svg><span class="a tt">Eigene Dateien</span></div>
 <div class="a tbtn" style="left:589px"><svg class="a" style="left:8px;top:4px" width="16" height="16" viewBox="0 0 16 16"><path d="M1 3 H6 L7 4.5 H14 V13 H1 Z" fill="#f0c040" stroke="#b88a20" stroke-width="0.6"/><circle cx="6" cy="8" r="3.2" fill="#c8e8f8" stroke="#88a" stroke-width="0.6"/><path d="M8.5 10.5 L11 13" stroke="#c87040" stroke-width="1.5"/></svg><span class="a tt">Eigene Bilder</span></div>
 <div class="a tbtn" style="left:749px"><svg class="a" style="left:8px;top:4px" width="16" height="16" viewBox="0 0 16 16"><rect x="0.5" y="0.5" width="14" height="14" fill="#a89888"/><rect x="1.5" y="1.5" width="12" height="12" fill="#58b8e8"/><path d="M1.5 6 Q5 4 8 9 L13.5 6 V13.5 H1.5Z" fill="#1a8a2a"/><path d="M6 13.5 L13.5 9 V13.5Z" fill="#e8e890"/></svg><span class="a tt">Robert Phasediscrimi...</span></div>
 <div class="a" style="left:1116px;top:7px;width:16px;height:16px;background:#3a6ed8"></div>
 <span class="a" style="left:1117px;top:9px;font-size:11px;color:#fff">DE</span>
 <div class="a" style="left:1151px;top:0;width:129px;height:30px;background:linear-gradient(180deg,#1d7de0 0px,#18aaf0 1px,#14a0ee 3px,#0d8ee8 8px,#0b8be6 24px,#0a78d8 28px,#0964c8 30px);border-left:1px solid #1042af"></div>
 <div class="a" style="left:1142px;top:6px;width:18px;height:18px;border-radius:50%;background:radial-gradient(circle at 40% 35%,#8cc8ff,#2a80e8 60%,#1a5ec0);border:1px solid #d8e8ff"></div>
 <svg class="a" style="left:1146px;top:10px" width="10" height="10"><path d="M7 1.5 L3.5 5 L7 8.5" stroke="#fff" stroke-width="2" fill="none"/></svg>
 <svg class="a" style="left:1161px;top:7px" width="18" height="17" viewBox="0 0 18 17"><circle cx="11" cy="6" r="5.5" fill="#2ca02c"/><path d="M2 2 H6 V7 Q4 9 2 7 Z" fill="#2050c0"/><ellipse cx="9.5" cy="12" rx="7" ry="3" fill="#c8c8c8"/><circle cx="10" cy="13" r="2.5" fill="#5ad040"/></svg>
 <svg class="a" style="left:1180px;top:8px" width="17" height="16" viewBox="0 0 17 16"><rect x="1" y="3" width="9" height="7" fill="#404858" stroke="#c8c8d0" stroke-width="0.8"/><rect x="2" y="11" width="8" height="3" fill="#d0d0d8"/><path d="M12 3 Q14 6.5 12 10 M14 1.5 Q16.5 6.5 14 11.5" stroke="#e8e8f0" stroke-width="1" fill="none"/></svg>
 <svg class="a" style="left:1199px;top:8px" width="14" height="15" viewBox="0 0 14 15"><path d="M1 1.5 Q7 -0.5 13 1.5 V8 Q12 12.5 7 14.5 Q2 12.5 1 8 Z" fill="#d81818" stroke="#fff" stroke-width="0.8"/><path d="M9.5 4.5 H5 V10 H9.5 V7.5 H7.5" stroke="#fff" stroke-width="1.6" fill="none"/></svg>
 <div class="a" style="left:1219px;top:7px;width:11px;height:17px;background:#00ff00;border:1px solid #000"></div>
 <span class="a" style="left:1239px;top:9px;font-size:11px;color:#fff;white-space:nowrap">16:44</span>
</div>
<!--SCH-->
<svg class="a" style="left:0;top:0" width="1280" height="800" viewBox="0 0 1280 800">
<defs><clipPath id="sc"><rect x="8" y="453" width="1247" height="273"/></clipPath></defs>
<g clip-path="url(#sc)">
<g fill="none" stroke-width="1" shape-rendering="crispEdges">
<path d="M853.5 509.5 H893.5 L904.5 520.5 V543.5 L893.5 554.5 H853.5 Z" stroke="#0000c0"/>
<rect x="852.5" y="542.5" width="3" height="3" fill="none" stroke="#0000ff" shape-rendering="auto" stroke-width="1"/>
<rect x="852.5" y="553.5" width="3" height="3" fill="none" stroke="#0000ff" shape-rendering="auto" stroke-width="1"/>
<path d="M785.5 520.5 L853.5 520.5" stroke="#0000ff"/>
<path d="M785.5 520.5 L785.5 528.5" stroke="#0000ff"/>
<circle cx="785.5" cy="539.5" r="11" stroke="#000080" fill="none" shape-rendering="auto"/>
<path d="M780.5 534.5 H790.5 M785.5 529.5 V539.5 M780.5 547.5 H790.5" stroke="#000080" />
<path d="M785.5 550.5 L785.5 577.5" stroke="#0000ff"/>
<path d="M778.5 577.5 H792.5 L785.5 584.5 Z" stroke="#0000ff" fill="none"/>
<path d="M853.5 650.5 H893.5 L904.5 662.5 V684.5 L893.5 695.5 H853.5 Z" stroke="#0000c0"/>
<rect x="852.5" y="683.5" width="3" height="3" fill="none" stroke="#0000ff" shape-rendering="auto" stroke-width="1"/>
<rect x="852.5" y="694.5" width="3" height="3" fill="none" stroke="#0000ff" shape-rendering="auto" stroke-width="1"/>
<path d="M785.5 662.5 L853.5 662.5" stroke="#0000ff"/>
<path d="M785.5 662.5 L785.5 669.5" stroke="#0000ff"/>
<circle cx="785.5" cy="680.5" r="11" stroke="#000080" fill="none" shape-rendering="auto"/>
<path d="M780.5 675.5 H790.5 M785.5 670.5 V680.5 M780.5 688.5 H790.5" stroke="#000080" />
<path d="M785.5 691.5 L785.5 718.5" stroke="#0000ff"/>
<path d="M778.5 718.5 H792.5 L785.5 725.5 Z" stroke="#0000ff" fill="none"/>
<path d="M904.5 520.5 L1092.5 520.5" stroke="#0000ff"/>
<path d="M1107.5 520.5 L1232.5 520.5 L1232.5 567.5" stroke="#0000ff"/>
<path d="M904.5 543.5 L995.5 543.5 L995.5 684.5 L904.5 684.5" stroke="#0000ff"/>
<path d="M995.5 582.5 L1010.5 582.5" stroke="#0000ff"/>
<path d="M1013.5 582.5 L1063.5 582.5" stroke="#0000ff"/>
<path d="M1092.5 582.5 L1159.5 582.5" stroke="#0000ff"/>
<path d="M1023.5 548.5 L1023.5 633.5" stroke="#0000ff"/>
<path d="M904.5 662.5 L1098.5 662.5" stroke="#0000ff"/>
<path d="M1106.5 662.5 L1232.5 662.5 L1232.5 627.5" stroke="#0000ff"/>
<path d="M1232.5 591.5 L1232.5 600.5" stroke="#0000ff"/>
<path d="M1125.5 520.5 L1125.5 538.5" stroke="#0000ff"/>
<path d="M1125.5 563.5 L1125.5 606.5" stroke="#0000ff"/>
<path d="M1125.5 631.5 L1125.5 662.5" stroke="#0000ff"/>
<path d="M1159.5 520.5 L1159.5 538.5" stroke="#0000ff"/>
<path d="M1159.5 560.5 L1159.5 604.5" stroke="#0000ff"/>
<path d="M1159.5 630.5 L1159.5 684.5" stroke="#0000ff"/>
<path d="M1152.5 684.5 H1165.5 L1159.5 691.5 Z" stroke="#0000ff" fill="none"/>
<rect x="1022" y="519" width="3" height="3" fill="#0000ff" stroke="none"/>
<rect x="1084" y="519" width="3" height="3" fill="#0000ff" stroke="none"/>
<rect x="1124" y="519" width="3" height="3" fill="#0000ff" stroke="none"/>
<rect x="1158" y="519" width="3" height="3" fill="#0000ff" stroke="none"/>
<rect x="994" y="581" width="3" height="3" fill="#0000ff" stroke="none"/>
<rect x="1022" y="581" width="3" height="3" fill="#0000ff" stroke="none"/>
<rect x="1124" y="581" width="3" height="3" fill="#0000ff" stroke="none"/>
<rect x="1158" y="581" width="3" height="3" fill="#0000ff" stroke="none"/>
<rect x="1022" y="661" width="3" height="3" fill="#0000ff" stroke="none"/>
<rect x="1090" y="661" width="3" height="3" fill="#0000ff" stroke="none"/>
<rect x="1124" y="661" width="3" height="3" fill="#0000ff" stroke="none"/>
<rect x="1158" y="661" width="3" height="3" fill="#0000ff" stroke="none"/>
<path d="M1159.5 538 V547.5 M1153 547.5 H1165 M1153 550.5 H1165 M1159.5 550.5 V560" stroke="#000080" />
<path d="M1159.5 604 V615.5 M1153 615.5 H1165 M1153 618.5 H1165 M1159.5 618.5 V630" stroke="#000080" />
<path d="M1010.5 577 V588 M1013.5 577 V588" stroke="#000080" />
<path d="M1125.5 538.5 L1131.0 543.0 L1120.0 548.5 L1131.0 554.0 L1120.0 560.5 L1125.5 563.0" stroke="#000080" fill="none"/>
<path d="M1125.5 606 L1131.0 610.5 L1120.0 616 L1131.0 621.5 L1120.0 628 L1125.5 630.5" stroke="#000080" fill="none"/>
<path d="M1232.5 567 L1238.0 571.5 L1227.0 577 L1238.0 582.5 L1227.0 589 L1232.5 591.5" stroke="#000080" fill="none"/>
<rect x="1026" y="521" width="1" height="1" fill="#000080" stroke="none"/>
<rect x="1027" y="522" width="1" height="1" fill="#000080" stroke="none"/>
<rect x="1028" y="523" width="1" height="1" fill="#000080" stroke="none"/>
<rect x="1029" y="524" width="1" height="1" fill="#000080" stroke="none"/>
<rect x="1029" y="525" width="1" height="1" fill="#000080" stroke="none"/>
<rect x="1029" y="526" width="1" height="1" fill="#000080" stroke="none"/>
<rect x="1028" y="527" width="1" height="1" fill="#000080" stroke="none"/>
<rect x="1023" y="528" width="2" height="1" fill="#000080" stroke="none"/>
<rect x="1028" y="528" width="1" height="1" fill="#000080" stroke="none"/>
<rect x="1021" y="529" width="2" height="1" fill="#000080" stroke="none"/>
<rect x="1025" y="529" width="2" height="1" fill="#000080" stroke="none"/>
<rect x="1028" y="529" width="1" height="1" fill="#000080" stroke="none"/>
<rect x="1019" y="530" width="2" height="1" fill="#000080" stroke="none"/>
<rect x="1027" y="530" width="2" height="1" fill="#000080" stroke="none"/>
<rect x="1021" y="531" width="6" height="1" fill="#000080" stroke="none"/>
<rect x="1029" y="531" width="1" height="1" fill="#000080" stroke="none"/>
<rect x="1029" y="532" width="1" height="1" fill="#000080" stroke="none"/>
<rect x="1029" y="533" width="1" height="1" fill="#000080" stroke="none"/>
<rect x="1029" y="534" width="1" height="1" fill="#000080" stroke="none"/>
<rect x="1029" y="535" width="1" height="1" fill="#000080" stroke="none"/>
<rect x="1028" y="536" width="1" height="1" fill="#000080" stroke="none"/>
<rect x="1022" y="537" width="4" height="1" fill="#000080" stroke="none"/>
<rect x="1028" y="537" width="1" height="1" fill="#000080" stroke="none"/>
<rect x="1019" y="538" width="3" height="1" fill="#000080" stroke="none"/>
<rect x="1026" y="538" width="3" height="1" fill="#000080" stroke="none"/>
<rect x="1020" y="539" width="2" height="1" fill="#000080" stroke="none"/>
<rect x="1025" y="539" width="4" height="1" fill="#000080" stroke="none"/>
<rect x="1022" y="540" width="4" height="1" fill="#000080" stroke="none"/>
<rect x="1029" y="540" width="1" height="1" fill="#000080" stroke="none"/>
<rect x="1029" y="541" width="1" height="1" fill="#000080" stroke="none"/>
<rect x="1029" y="542" width="1" height="1" fill="#000080" stroke="none"/>
<rect x="1028" y="543" width="1" height="1" fill="#000080" stroke="none"/>
<rect x="1028" y="544" width="1" height="1" fill="#000080" stroke="none"/>
<rect x="1027" y="545" width="1" height="1" fill="#000080" stroke="none"/>
<rect x="1026" y="546" width="1" height="1" fill="#000080" stroke="none"/>
<rect x="1025" y="547" width="1" height="1" fill="#000080" stroke="none"/>
<rect x="1023" y="548" width="2" height="1" fill="#000080" stroke="none"/>
<rect x="1023" y="634" width="2" height="1" fill="#000080" stroke="none"/>
<rect x="1025" y="635" width="1" height="1" fill="#000080" stroke="none"/>
<rect x="1026" y="636" width="1" height="1" fill="#000080" stroke="none"/>
<rect x="1027" y="637" width="1" height="1" fill="#000080" stroke="none"/>
<rect x="1028" y="638" width="1" height="1" fill="#000080" stroke="none"/>
<rect x="1028" y="639" width="1" height="1" fill="#000080" stroke="none"/>
<rect x="1029" y="640" width="1" height="1" fill="#000080" stroke="none"/>
<rect x="1029" y="641" width="1" height="1" fill="#000080" stroke="none"/>
<rect x="1022" y="642" width="4" height="1" fill="#000080" stroke="none"/>
<rect x="1029" y="642" width="1" height="1" fill="#000080" stroke="none"/>
<rect x="1020" y="643" width="2" height="1" fill="#000080" stroke="none"/>
<rect x="1025" y="643" width="4" height="1" fill="#000080" stroke="none"/>
<rect x="1019" y="644" width="3" height="1" fill="#000080" stroke="none"/>
<rect x="1026" y="644" width="3" height="1" fill="#000080" stroke="none"/>
<rect x="1022" y="645" width="4" height="1" fill="#000080" stroke="none"/>
<rect x="1028" y="645" width="1" height="1" fill="#000080" stroke="none"/>
<rect x="1028" y="646" width="1" height="1" fill="#000080" stroke="none"/>
<rect x="1029" y="647" width="1" height="1" fill="#000080" stroke="none"/>
<rect x="1029" y="648" width="1" height="1" fill="#000080" stroke="none"/>
<rect x="1029" y="649" width="1" height="1" fill="#000080" stroke="none"/>
<rect x="1029" y="650" width="1" height="1" fill="#000080" stroke="none"/>
<rect x="1021" y="651" width="6" height="1" fill="#000080" stroke="none"/>
<rect x="1029" y="651" width="1" height="1" fill="#000080" stroke="none"/>
<rect x="1019" y="652" width="2" height="1" fill="#000080" stroke="none"/>
<rect x="1027" y="652" width="2" height="1" fill="#000080" stroke="none"/>
<rect x="1021" y="653" width="2" height="1" fill="#000080" stroke="none"/>
<rect x="1025" y="653" width="2" height="1" fill="#000080" stroke="none"/>
<rect x="1028" y="653" width="1" height="1" fill="#000080" stroke="none"/>
<rect x="1023" y="654" width="2" height="1" fill="#000080" stroke="none"/>
<rect x="1028" y="654" width="1" height="1" fill="#000080" stroke="none"/>
<rect x="1028" y="655" width="1" height="1" fill="#000080" stroke="none"/>
<rect x="1029" y="656" width="1" height="1" fill="#000080" stroke="none"/>
<rect x="1029" y="657" width="1" height="1" fill="#000080" stroke="none"/>
<rect x="1029" y="658" width="1" height="1" fill="#000080" stroke="none"/>
<rect x="1028" y="659" width="1" height="1" fill="#000080" stroke="none"/>
<rect x="1027" y="660" width="1" height="1" fill="#000080" stroke="none"/>
<rect x="1026" y="661" width="1" height="1" fill="#000080" stroke="none"/>
<rect x="1235" y="600" width="1" height="1" fill="#000080" stroke="none"/>
<rect x="1236" y="601" width="1" height="1" fill="#000080" stroke="none"/>
<rect x="1237" y="602" width="1" height="1" fill="#000080" stroke="none"/>
<rect x="1238" y="603" width="1" height="1" fill="#000080" stroke="none"/>
<rect x="1238" y="604" width="1" height="1" fill="#000080" stroke="none"/>
<rect x="1238" y="605" width="1" height="1" fill="#000080" stroke="none"/>
<rect x="1237" y="606" width="1" height="1" fill="#000080" stroke="none"/>
<rect x="1232" y="607" width="2" height="1" fill="#000080" stroke="none"/>
<rect x="1237" y="607" width="1" height="1" fill="#000080" stroke="none"/>
<rect x="1230" y="608" width="2" height="1" fill="#000080" stroke="none"/>
<rect x="1234" y="608" width="2" height="1" fill="#000080" stroke="none"/>
<rect x="1237" y="608" width="1" height="1" fill="#000080" stroke="none"/>
<rect x="1228" y="609" width="2" height="1" fill="#000080" stroke="none"/>
<rect x="1236" y="609" width="2" height="1" fill="#000080" stroke="none"/>
<rect x="1230" y="610" width="6" height="1" fill="#000080" stroke="none"/>
<rect x="1238" y="610" width="1" height="1" fill="#000080" stroke="none"/>
<rect x="1238" y="611" width="1" height="1" fill="#000080" stroke="none"/>
<rect x="1238" y="612" width="1" height="1" fill="#000080" stroke="none"/>
<rect x="1238" y="613" width="1" height="1" fill="#000080" stroke="none"/>
<rect x="1238" y="614" width="1" height="1" fill="#000080" stroke="none"/>
<rect x="1237" y="615" width="1" height="1" fill="#000080" stroke="none"/>
<rect x="1231" y="616" width="4" height="1" fill="#000080" stroke="none"/>
<rect x="1237" y="616" width="1" height="1" fill="#000080" stroke="none"/>
<rect x="1228" y="617" width="3" height="1" fill="#000080" stroke="none"/>
<rect x="1235" y="617" width="3" height="1" fill="#000080" stroke="none"/>
<rect x="1229" y="618" width="2" height="1" fill="#000080" stroke="none"/>
<rect x="1234" y="618" width="4" height="1" fill="#000080" stroke="none"/>
<rect x="1231" y="619" width="4" height="1" fill="#000080" stroke="none"/>
<rect x="1238" y="619" width="1" height="1" fill="#000080" stroke="none"/>
<rect x="1238" y="620" width="1" height="1" fill="#000080" stroke="none"/>
<rect x="1238" y="621" width="1" height="1" fill="#000080" stroke="none"/>
<rect x="1237" y="622" width="1" height="1" fill="#000080" stroke="none"/>
<rect x="1237" y="623" width="1" height="1" fill="#000080" stroke="none"/>
<rect x="1236" y="624" width="1" height="1" fill="#000080" stroke="none"/>
<rect x="1235" y="625" width="1" height="1" fill="#000080" stroke="none"/>
<rect x="1234" y="626" width="1" height="1" fill="#000080" stroke="none"/>
<rect x="1232" y="627" width="2" height="1" fill="#000080" stroke="none"/>
<rect x="1072" y="578" width="2" height="1" fill="#000080" stroke="none"/>
<rect x="1081" y="578" width="2" height="1" fill="#000080" stroke="none"/>
<rect x="1071" y="579" width="1" height="1" fill="#000080" stroke="none"/>
<rect x="1074" y="579" width="1" height="1" fill="#000080" stroke="none"/>
<rect x="1080" y="579" width="1" height="1" fill="#000080" stroke="none"/>
<rect x="1083" y="579" width="1" height="1" fill="#000080" stroke="none"/>
<rect x="1071" y="580" width="1" height="1" fill="#000080" stroke="none"/>
<rect x="1074" y="580" width="1" height="1" fill="#000080" stroke="none"/>
<rect x="1080" y="580" width="1" height="1" fill="#000080" stroke="none"/>
<rect x="1083" y="580" width="1" height="1" fill="#000080" stroke="none"/>
<rect x="1071" y="581" width="1" height="1" fill="#000080" stroke="none"/>
<rect x="1074" y="581" width="1" height="1" fill="#000080" stroke="none"/>
<rect x="1080" y="581" width="1" height="1" fill="#000080" stroke="none"/>
<rect x="1083" y="581" width="1" height="1" fill="#000080" stroke="none"/>
<rect x="1063" y="582" width="1" height="1" fill="#000080" stroke="none"/>
<rect x="1071" y="582" width="1" height="1" fill="#000080" stroke="none"/>
<rect x="1074" y="582" width="1" height="1" fill="#000080" stroke="none"/>
<rect x="1080" y="582" width="1" height="1" fill="#000080" stroke="none"/>
<rect x="1083" y="582" width="1" height="1" fill="#000080" stroke="none"/>
<rect x="1063" y="583" width="1" height="1" fill="#000080" stroke="none"/>
<rect x="1071" y="583" width="1" height="1" fill="#000080" stroke="none"/>
<rect x="1074" y="583" width="1" height="1" fill="#000080" stroke="none"/>
<rect x="1080" y="583" width="1" height="1" fill="#000080" stroke="none"/>
<rect x="1083" y="583" width="1" height="1" fill="#000080" stroke="none"/>
<rect x="1092" y="583" width="1" height="1" fill="#000080" stroke="none"/>
<rect x="1063" y="584" width="1" height="1" fill="#000080" stroke="none"/>
<rect x="1071" y="584" width="1" height="1" fill="#000080" stroke="none"/>
<rect x="1074" y="584" width="1" height="1" fill="#000080" stroke="none"/>
<rect x="1080" y="584" width="1" height="1" fill="#000080" stroke="none"/>
<rect x="1083" y="584" width="1" height="1" fill="#000080" stroke="none"/>
<rect x="1092" y="584" width="1" height="1" fill="#000080" stroke="none"/>
<rect x="1063" y="585" width="1" height="1" fill="#000080" stroke="none"/>
<rect x="1072" y="585" width="2" height="1" fill="#000080" stroke="none"/>
<rect x="1081" y="585" width="2" height="1" fill="#000080" stroke="none"/>
<rect x="1091" y="585" width="1" height="1" fill="#000080" stroke="none"/>
<rect x="1064" y="586" width="1" height="1" fill="#000080" stroke="none"/>
<rect x="1072" y="586" width="2" height="1" fill="#000080" stroke="none"/>
<rect x="1081" y="586" width="2" height="1" fill="#000080" stroke="none"/>
<rect x="1090" y="586" width="1" height="1" fill="#000080" stroke="none"/>
<rect x="1065" y="587" width="1" height="1" fill="#000080" stroke="none"/>
<rect x="1071" y="587" width="1" height="1" fill="#000080" stroke="none"/>
<rect x="1074" y="587" width="1" height="1" fill="#000080" stroke="none"/>
<rect x="1080" y="587" width="1" height="1" fill="#000080" stroke="none"/>
<rect x="1083" y="587" width="1" height="1" fill="#000080" stroke="none"/>
<rect x="1089" y="587" width="1" height="1" fill="#000080" stroke="none"/>
<rect x="1066" y="588" width="5" height="1" fill="#000080" stroke="none"/>
<rect x="1075" y="588" width="5" height="1" fill="#000080" stroke="none"/>
<rect x="1084" y="588" width="5" height="1" fill="#000080" stroke="none"/>
<path d="M1092.5 514.5 V527.0 L1101.5 520.5 Z M1101.5 514.5 V527.0 M1101.5 514.5 H1104.5 V517.5 M1101.5 527.0 H1098.5 V524.0 M1101.5 520.5 H1107.5" stroke="#000080" fill="none"/>
<path d="M1086.5 520.5 L1092.5 520.5" stroke="#0000ff"/>
<path d="M1098.5 656.5 V669.0 L1107.5 662.5 Z M1107.5 656.5 V669.0 M1107.5 656.5 H1110.5 V659.5 M1107.5 669.0 H1104.5 V666.0 M1107.5 662.5 H1113.5" stroke="#000080" fill="none"/>
<path d="M1092.5 662.5 L1098.5 662.5" stroke="#0000ff"/>
</g>
<g font-family="Liberation Sans" font-size="7" font-weight="bold" fill="#000">
<text x="675.5" y="470">PULSE(0 -1 0 1.5us 1.5us 0 0 6)</text>
<text x="672" y="482">AC 1</text>
<text x="751.5" y="482">Rser=800</text>
<text x="858.5" y="506">A1</text>
<text x="858.5" y="516">Mark=10000000, space=1000</text>
<text x="858" y="523">FM</text>
<text x="901" y="523" text-anchor="end">SIN</text>
<text x="858" y="546">AM</text>
<text x="901" y="546" text-anchor="end">COS</text>
<text x="759.5" y="541">V2</text>
<text x="675.5" y="611">PULSE(0 1 0 1.5us 1.5us 0 0 6)</text>
<text x="672" y="623">AC 1</text>
<text x="751.5" y="623">Rser=800</text>
<text x="858.5" y="647">A2</text>
<text x="858.5" y="657">Mark=10000000, space=1000</text>
<text x="858" y="664">FM</text>
<text x="901" y="664" text-anchor="end">SIN</text>
<text x="858" y="687">AM</text>
<text x="901" y="687" text-anchor="end">COS</text>
<text x="759.5" y="682">V3</text>
<text x="1078.5" y="498">HSMS2860</text>
<text x="1092.5" y="512">D1</text>
<text x="1030.5" y="531">L3</text>
<text x="1030" y="546">2µH</text>
<text x="1007" y="575">C1</text>
<text x="1007" y="595">10n</text>
<text x="1074" y="576">L1</text>
<text x="1067.5" y="595">30µH</text>
<text x="1132.5" y="548">R2</text>
<text x="1133" y="561">10k</text>
<text x="1161.5" y="543">C2</text>
<text x="1163" y="563">10n</text>
<text x="1216.5" y="575">R1</text>
<text x="1214" y="588">100</text>
<text x="1239.5" y="611">L2</text>
<text x="1238.5" y="625">0.1</text>
<text x="1132.5" y="616">R3</text>
<text x="1133" y="629">10k</text>
<text x="1161.5" y="611">C3</text>
<text x="1163" y="631">10n</text>
<text x="1030.5" y="645">L4</text>
<text x="1030" y="660">2µH</text>
<text x="1097.5" y="654">D4</text>
<text x="1085" y="674">HSMS2860</text>
</g></g></svg>
<!--/SCH-->
<!--PLOT-->
<svg class="a" style="left:0;top:0;will-change:transform" width="1280" height="800" viewBox="0 0 1280 800">
<defs><clipPath id="pc"><rect x="49" y="137" width="1171" height="258"/></clipPath></defs>
<g shape-rendering="crispEdges" stroke="#c0c0c0" stroke-width="1" fill="none">
<path d="M48.5 155.5 H1220.5 M48.5 155.5 V402 M48.5 395.5 H1220.5 M1220.5 155.5 V402"/>
<path d="M41 155.5 H48"/>
<path d="M41 175.5 H48"/>
<path d="M41 195.5 H48"/>
<path d="M41 215.5 H48"/>
<path d="M41 235.5 H48"/>
<path d="M41 255.5 H48"/>
<path d="M41 275.5 H48"/>
<path d="M41 295.5 H48"/>
<path d="M41 315.5 H48"/>
<path d="M41 335.5 H48"/>
<path d="M41 355.5 H48"/>
<path d="M41 375.5 H48"/>
<path d="M41 395.5 H48"/>
<path d="M1221 155.5 H1228"/>
<path d="M1221 177.5 H1228"/>
<path d="M1221 199.5 H1228"/>
<path d="M1221 220.5 H1228"/>
<path d="M1221 242.5 H1228"/>
<path d="M1221 264.5 H1228"/>
<path d="M1221 286.5 H1228"/>
<path d="M1221 308.5 H1228"/>
<path d="M1221 330.5 H1228"/>
<path d="M1221 351.5 H1228"/>
<path d="M1221 373.5 H1228"/>
<path d="M1221 395.5 H1228"/>
<path d="M48.5 395.5 V402"/>
<path d="M165.5 395.5 V402"/>
<path d="M282.5 395.5 V402"/>
<path d="M400.5 395.5 V402"/>
<path d="M517.5 395.5 V402"/>
<path d="M634.5 395.5 V402"/>
<path d="M751.5 395.5 V402"/>
<path d="M868.5 395.5 V402"/>
<path d="M986.5 395.5 V402"/>
<path d="M1103.5 395.5 V402"/>
<path d="M1220.5 395.5 V402"/>
</g>
<g font-family="Liberation Sans" font-size="13" fill="#c8c8c8" stroke="#c0c0c0" stroke-width="0.35">
<text x="40" y="160.2" text-anchor="end">1.2V</text>
<text x="40" y="180.2" text-anchor="end">1.0V</text>
<text x="40" y="200.2" text-anchor="end">0.8V</text>
<text x="40" y="220.2" text-anchor="end">0.6V</text>
<text x="40" y="240.2" text-anchor="end">0.4V</text>
<text x="40" y="260.2" text-anchor="end">0.2V</text>
<text x="40" y="280.2" text-anchor="end">0.0V</text>
<text x="40" y="300.2" text-anchor="end">-0.2V</text>
<text x="40" y="320.2" text-anchor="end">-0.4V</text>
<text x="40" y="340.2" text-anchor="end">-0.6V</text>
<text x="40" y="360.2" text-anchor="end">-0.8V</text>
<text x="40" y="380.2" text-anchor="end">-1.0V</text>
<text x="40" y="400.2" text-anchor="end">-1.2V</text>
<text x="1231" y="160.2">4.8mA</text>
<text x="1231" y="182.0">4.4mA</text>
<text x="1231" y="203.8">4.0mA</text>
<text x="1231" y="225.7">3.6mA</text>
<text x="1231" y="247.5">3.2mA</text>
<text x="1231" y="269.3">2.8mA</text>
<text x="1231" y="291.1">2.4mA</text>
<text x="1231" y="312.9">2.0mA</text>
<text x="1231" y="334.7">1.6mA</text>
<text x="1231" y="356.6">1.2mA</text>
<text x="1231" y="378.4">0.8mA</text>
<text x="1231" y="400.2">0.4mA</text>
<text x="48.5" y="415" text-anchor="middle">0µs</text>
<text x="165.7" y="415" text-anchor="middle">1µs</text>
<text x="282.9" y="415" text-anchor="middle">2µs</text>
<text x="400.1" y="415" text-anchor="middle">3µs</text>
<text x="517.3" y="415" text-anchor="middle">4µs</text>
<text x="634.5" y="415" text-anchor="middle">5µs</text>
<text x="751.7" y="415" text-anchor="middle">6µs</text>
<text x="868.9" y="415" text-anchor="middle">7µs</text>
<text x="986.1" y="415" text-anchor="middle">8µs</text>
<text x="1103.3" y="415" text-anchor="middle">9µs</text>
<text x="1220.5" y="415" text-anchor="middle">10µs</text>
</g>
<g font-family="Liberation Sans" font-size="13" font-weight="bold">
<text x="219" y="150" fill="#00ff00">V(n002)</text>
<text x="609" y="150" fill="#0000ff">V(n009)</text>
<text x="1009" y="150" fill="#ff0000">I(L2)</text>
</g>
<g clip-path="url(#pc)" fill="none" stroke-width="1" shape-rendering="crispEdges">
<path stroke="#00ff00" d="M48.5 187.9 50.3 172.9 52.8 217.1 54.1 256.9 56.6 339.1 58.1 370.0 59.8 377.5 62.1 341.2 63.7 293.2 65.6 234.8 66.7 207.4 68.9 174.3 70.7 178.9 72.3 203.3 74.5 261.1 76.0 302.9 77.7 344.7 78.9 365.4 80.6 378.2 81.9 375.0 83.3 359.2 85.5 316.0 87.0 281.0 88.8 238.4 91.3 191.1 93.9 172.0 96.0 179.5 97.9 201.6 99.3 225.7 100.6 249.7 103.1 300.0 105.0 331.8 106.2 348.7 108.2 369.0 110.4 377.8 112.4 373.4 114.8 354.7 115.9 343.3 117.8 320.4 119.5 296.9 120.6 281.9 122.6 255.3 125.0 228.1 126.9 210.0 128.3 199.7 130.7 188.0 132.5 183.1 134.3 181.7 136.5 183.7 137.8 186.2 140.1 193.1 142.2 200.9 144.4 210.2 145.7 215.7 148.0 225.0 149.3 230.1 150.5 234.3 152.8 242.3 155.2 249.0 157.6 254.4 159.4 257.5 160.8 259.4 161.8 260.5 163.8 261.9 166.0 262.3 168.3 263.7 169.8 265.6 171.1 268.0 173.2 273.0 175.4 280.5 178.0 291.0 179.2 296.9 181.0 306.0 183.4 319.8 185.1 329.8 187.0 341.7 188.1 348.0 190.2 360.2 192.6 373.0 195.0 382.2 197.4 387.4 199.4 387.3 200.8 384.5 203.1 374.6 204.4 365.3 206.7 343.4 207.8 330.7 210.1 299.7 211.4 281.1 213.0 256.9 214.5 234.5 216.6 206.1 217.9 191.8 219.5 178.4 220.5 173.5 222.0 171.3 223.6 176.7 224.8 185.7 226.8 210.4 228.4 237.2 230.6 278.6 232.6 317.7 234.3 344.6 236.7 366.6 238.7 365.4 241.0 340.0 242.6 310.6 244.4 267.1 245.8 235.5 248.3 184.7 249.7 170.4 251.1 168.6 252.3 177.0 253.7 199.5 255.9 255.3 258.0 316.6 259.2 347.2 260.8 375.1 262.5 382.7 264.6 358.4 266.3 314.5 268.2 254.6 270.6 196.5 272.7 183.6 274.3 205.4 276.0 253.2 277.6 307.7 278.8 345.0 280.1 375.4 281.6 386.8 283.1 370.4 284.6 328.8 286.5 257.0 289.1 183.2 291.3 184.4 293.6 251.0 295.8 334.6 297.7 373.9 300.2 338.7 302.3 254.6 304.1 188.4 305.2 167.9 307.0 182.2 308.4 226.9 309.6 280.2 311.4 350.3 313.6 366.1 315.1 323.9 317.3 223.8 319.2 171.2 320.4 174.5 323.0 270.4 324.6 345.2 326.1 376.8 328.4 324.2 329.6 265.2 331.8 180.6 333.1 178.0 334.7 232.5 336.1 304.0 338.4 380.6 340.1 351.6 342.6 219.8 344.6 172.7 346.7 234.8 348.6 328.7 350.1 375.0 351.7 362.4 354.2 249.9 355.5 194.4 358.1 190.4 360.3 285.2 361.9 352.6 363.9 375.8 365.5 333.1 367.1 260.3 369.0 190.5 370.0 173.5 371.8 194.2 374.3 297.4 375.8 352.6 378.0 376.1 379.7 336.4 381.0 283.3 383.5 192.8 384.5 175.0 386.0 179.8 388.6 258.8 390.0 314.8 392.4 374.7 394.3 367.2 396.6 300.8 398.6 227.5 400.2 186.0 402.4 176.1 403.5 192.3 405.2 240.2 406.8 295.1 408.5 348.0 409.7 370.7 411.1 378.4 413.0 356.9 414.6 315.6 416.9 244.9 418.9 194.9 421.2 172.6 423.4 194.3 425.4 239.9 426.8 281.0 429.1 339.3 430.5 364.4 431.6 375.7 434.1 369.6 436.0 340.6 438.2 289.5 440.1 244.7 442.1 204.3 443.1 188.6 444.4 176.4 446.5 172.9 448.4 187.2 449.7 204.1 452.2 249.6 453.4 274.4 455.3 309.3 456.5 330.3 458.6 358.9 460.1 371.2 461.3 376.7 462.4 377.8 463.6 374.9 464.9 367.6 466.8 351.1 468.5 331.1 471.1 297.4 473.6 263.4 475.9 235.8 477.9 215.1 480.3 197.6 482.8 186.3 483.8 183.7 485.0 182.0 486.6 181.9 487.7 183.0 489.7 187.1 491.1 191.2 492.5 196.2 494.0 201.8 495.2 206.6 497.3 215.7 499.4 224.1 501.4 231.7 502.4 235.6 504.1 241.2 506.2 247.4 507.4 250.6 509.1 254.1 510.1 256.1 511.2 257.9 512.6 259.6 514.2 261.2 516.0 262.1 518.4 262.6 519.9 263.6 520.9 264.9 523.3 269.2 524.4 271.9 525.5 275.3 528.0 284.4 530.2 294.1 531.8 301.7 533.0 308.2 534.6 317.4 536.2 326.5 538.6 341.2 540.2 351.3 541.4 357.9 543.8 371.1 545.8 379.7 547.0 383.6 548.2 386.3 550.0 388.0 551.1 387.3 553.1 382.1 555.1 371.8 556.1 364.1 558.4 342.1 560.7 314.2 563.2 278.7 565.2 247.4 567.3 217.2 568.6 201.4 569.6 190.4 570.7 181.0 573.3 171.3 575.3 177.3 577.8 202.2 579.4 226.1 581.6 267.1 582.7 288.9 584.0 313.0 585.4 337.3 587.3 360.1 589.2 368.5 591.0 360.6 592.7 339.2 594.6 301.3 597.1 240.5 598.9 202.7 601.2 171.2 602.3 167.7 603.9 177.6 605.8 211.1 607.8 264.2 609.2 305.1 610.8 347.7 613.4 382.4 615.4 371.5 617.3 330.2 618.4 297.8 619.5 263.9 620.9 225.0 622.1 198.1 624.7 186.0 625.7 200.1 627.2 240.8 628.3 277.1 630.4 344.0 631.4 370.3 632.5 385.0 633.7 384.5 635.1 360.7 637.0 298.0 639.3 214.7 640.7 181.9 642.2 176.2 644.5 227.4 646.7 311.4 647.9 350.4 650.2 372.6 652.5 312.3 653.8 258.2 655.8 185.3 657.1 166.2 658.5 180.3 660.3 242.4 662.2 322.4 663.9 369.1 665.8 354.4 667.1 306.1 669.4 206.3 670.8 170.8 673.3 211.3 675.1 297.5 676.6 358.0 677.9 377.3 679.6 340.2 681.2 264.1 683.2 183.8 685.0 184.6 686.1 221.9 688.4 339.4 689.5 374.2 691.8 344.7 694.1 223.9 696.6 176.1 698.7 252.3 699.9 317.7 701.6 374.7 703.3 361.0 705.4 272.4 707.0 199.6 709.1 176.5 710.4 213.3 711.9 286.3 713.8 361.9 715.5 376.1 716.7 349.2 719.2 237.9 721.3 175.5 723.7 203.7 725.2 267.3 727.8 362.8 730.1 369.5 732.6 282.9 733.9 228.6 735.7 179.7 737.3 176.4 739.3 225.6 740.7 280.1 741.9 324.6 743.6 370.5 745.7 371.5 747.3 333.5 749.8 240.3 751.5 192.1 753.0 173.0 755.3 197.1 757.0 248.5 758.5 298.2 759.9 342.7 762.4 378.4 765.0 348.7 767.0 291.1 768.5 245.7 770.6 192.2 771.9 175.2 773.5 174.9 775.3 200.5 777.0 240.0 778.5 284.0 781.1 347.7 782.4 368.0 784.3 378.3 785.4 372.8 786.5 359.1 787.9 334.8 790.5 274.0 792.6 223.9 795.0 185.1 796.1 175.9 798.2 173.2 799.9 185.9 801.6 208.8 803.7 247.7 805.2 277.4 807.0 312.2 808.4 335.7 810.1 357.0 811.9 372.6 813.2 377.3 814.6 376.9 816.3 369.5 818.0 354.9 820.3 328.8 822.3 301.8 824.2 275.9 826.6 245.4 827.9 230.6 829.1 218.9 830.7 205.3 832.0 197.2 833.9 188.1 835.8 183.0 837.0 181.8 839.1 182.8 841.0 186.4 842.7 191.2 845.2 200.1 847.5 209.8 848.9 215.4 850.2 220.7 852.6 230.5 853.9 235.1 856.1 242.4 857.6 246.8 859.2 250.9 861.0 254.9 863.5 258.9 864.5 260.0 865.8 261.2 867.9 262.2 869.6 262.4 871.0 263.2 873.6 266.6 875.0 269.5 877.1 275.4 879.7 284.6 881.9 294.4 884.0 305.2 886.2 317.2 888.5 330.9 889.9 339.7 891.9 351.8 894.2 364.8 896.6 376.5 899.1 384.8 901.5 388.0 902.7 387.3 904.3 383.7 906.0 376.0 908.4 358.2 910.1 341.4 911.5 324.3 912.6 310.6 914.0 289.7 916.3 255.9 917.3 240.4 918.6 222.3 920.1 203.1 921.9 184.4 923.5 174.4 925.9 172.7 927.2 179.3 929.1 198.2 931.4 232.8 933.9 280.2 936.3 325.2 937.5 344.1 939.8 365.9 941.8 365.9 943.5 350.5 944.5 334.5 945.8 309.5 948.0 257.9 949.2 230.9 950.7 199.4 952.1 178.1 954.3 168.3 955.8 181.6 957.0 201.4 958.6 240.2 960.1 284.1 962.2 342.8 963.7 371.5 965.9 382.2 967.7 359.3 970.1 294.8 972.3 229.1 974.0 193.5 975.7 182.8 977.5 204.8 979.9 275.2 981.1 317.2 982.8 365.0 984.6 386.8 986.3 369.2 988.3 310.6 990.1 242.6 991.8 192.6 993.9 176.6 995.4 204.3 997.4 274.1 999.5 350.5 1000.7 372.4 1002.3 367.0 1004.8 286.6 1007.3 188.4 1009.9 175.5 1011.0 204.5 1013.3 303.2 1015.8 371.3 1018.2 326.9 1020.4 230.8 1022.5 170.4 1024.6 200.8 1026.5 288.6 1028.8 371.6 1030.6 362.0 1031.9 309.3 1033.1 251.5 1035.6 174.1 1037.8 224.6 1039.0 290.6 1041.4 378.1 1042.8 365.9 1044.9 270.1 1046.4 195.5 1047.8 172.5 1049.1 196.8 1050.2 246.1 1051.3 305.0 1052.4 353.7 1053.5 377.7 1055.9 326.3 1057.7 235.6 1058.9 189.2 1060.7 177.9 1062.6 241.0 1064.4 326.5 1065.7 369.4 1067.4 371.4 1069.8 284.7 1071.4 213.3 1073.2 173.1 1075.7 220.0 1077.1 279.0 1079.3 360.6 1081.0 377.2 1083.3 321.0 1084.9 255.2 1086.7 190.8 1088.3 172.6 1090.7 219.1 1093.2 314.4 1095.2 370.0 1097.8 362.6 1099.9 296.3 1102.3 213.6 1104.7 172.7 1106.1 182.6 1108.7 251.4 1110.3 307.3 1112.1 357.0 1113.4 375.7 1115.7 365.3 1117.3 331.1 1119.4 266.8 1120.7 226.3 1122.3 190.6 1123.9 173.3 1125.3 176.6 1126.3 189.7 1128.6 240.1 1131.1 310.5 1132.5 343.0 1133.7 364.9 1135.3 377.9 1136.4 376.8 1138.4 354.5 1140.0 323.0 1141.9 277.4 1144.4 220.9 1146.8 183.6 1149.2 171.8 1151.7 188.6 1153.7 217.4 1155.5 251.3 1156.5 272.4 1157.7 295.3 1159.5 328.0 1161.9 359.7 1163.6 373.1 1164.6 377.0 1165.9 377.4 1168.2 367.5 1169.4 357.0 1170.7 343.1 1172.2 325.2 1174.2 298.7 1176.5 267.0 1177.9 249.9 1179.8 227.8 1181.7 210.6 1183.4 198.3 1185.3 188.7 1187.6 182.7 1189.0 181.7 1190.7 182.8 1191.9 184.7 1193.7 189.4 1196.0 197.1 1198.6 207.5 1200.4 214.9 1201.8 221.0 1203.8 228.7 1205.3 234.6 1206.5 238.7 1208.4 244.5 1210.7 250.6 1213.1 255.7 1215.6 259.5 1217.2 261.0 1218.6 261.9 1219.8 262.3"/>
<path stroke="#0000ff" d="M48.5 368.9 50.3 376.2 52.8 323.3 54.1 281.9 56.6 202.6 58.1 176.8 59.8 175.9 62.1 219.8 63.7 270.0 65.6 327.2 66.7 352.4 68.9 378.3 70.7 367.1 72.3 338.4 74.5 277.6 76.0 236.4 77.7 197.7 78.9 180.3 80.6 172.6 81.9 179.9 83.3 199.5 85.5 246.6 87.0 282.4 88.8 323.8 91.3 366.4 93.9 377.6 96.0 361.7 97.9 333.6 99.3 306.2 100.6 280.5 103.1 230.2 105.0 201.0 106.2 186.8 108.2 173.0 110.4 172.8 112.4 184.5 114.8 211.3 115.9 225.7 117.8 253.0 119.5 279.5 120.6 295.9 122.6 324.0 125.0 351.4 126.9 368.4 128.3 377.4 130.7 386.2 132.5 388.1 134.3 386.3 136.5 379.9 137.8 374.8 140.1 362.9 142.2 350.6 144.4 336.4 145.7 328.1 148.0 314.0 149.3 306.3 150.5 300.0 152.8 287.9 155.2 277.5 157.6 269.0 159.4 264.1 160.8 261.0 161.8 259.3 163.8 257.0 166.0 256.3 168.3 255.5 169.8 254.3 171.1 252.8 173.2 249.7 175.4 245.0 178.0 238.3 179.2 234.5 181.0 228.6 183.4 219.7 185.1 213.2 187.0 205.5 188.1 201.5 190.2 193.9 192.6 186.6 195.0 182.3 197.4 181.8 199.4 185.5 200.8 190.5 203.1 203.2 204.4 213.6 206.7 236.5 207.8 249.2 210.1 278.9 211.4 296.0 213.0 317.6 214.5 336.7 216.6 359.3 217.9 369.4 219.5 376.9 220.5 378.1 222.0 374.8 223.6 363.2 224.8 350.1 226.8 319.2 228.4 288.8 230.6 244.5 232.6 205.4 234.3 180.1 236.7 162.9 238.7 169.3 241.0 200.6 242.6 233.2 244.4 279.0 245.8 311.0 248.3 359.8 249.7 372.0 251.1 371.4 252.3 361.3 253.7 337.5 255.9 282.4 258.0 225.9 259.2 199.8 260.8 179.4 262.5 180.3 264.6 214.2 266.3 263.4 268.2 325.0 270.6 378.9 272.7 384.4 274.3 357.3 276.0 305.7 277.6 250.8 278.8 215.1 280.1 188.3 281.6 181.8 283.1 202.7 284.6 246.4 286.5 315.8 289.1 377.8 291.3 362.8 293.6 286.7 295.8 202.7 297.7 169.2 300.2 212.6 302.3 297.3 304.1 357.3 305.2 371.8 307.0 348.1 308.4 299.0 309.6 245.1 311.4 180.6 313.6 177.5 315.1 226.4 317.3 327.8 319.2 373.4 320.4 364.1 323.0 262.9 324.6 193.6 326.1 171.3 328.4 237.4 329.6 298.3 331.8 376.1 333.1 371.5 334.7 310.6 336.1 239.4 338.4 175.0 340.1 213.7 342.6 341.2 344.6 376.8 346.7 304.6 348.6 212.1 350.1 173.5 351.7 195.8 354.2 312.9 355.5 363.6 358.1 353.0 360.3 253.6 361.9 190.8 363.9 178.7 365.5 228.5 367.1 302.8 369.0 366.8 370.0 378.5 371.8 348.6 374.3 241.7 375.8 190.8 378.0 178.3 379.7 224.9 381.0 280.1 383.5 365.0 384.5 378.0 386.0 366.0 388.6 279.9 390.0 225.1 392.4 173.7 394.3 190.0 396.6 262.3 398.6 334.1 400.2 370.5 402.4 370.9 403.5 350.9 405.2 299.0 406.8 243.9 408.5 194.7 409.7 176.3 411.1 174.0 413.0 202.2 414.6 247.0 416.9 317.7 418.9 363.2 421.2 377.3 423.4 348.6 425.4 299.2 426.8 257.7 429.1 202.5 430.5 181.0 431.6 173.2 434.1 187.1 436.0 220.5 438.2 273.8 440.1 317.8 442.1 355.1 443.1 368.4 444.4 377.3 446.5 372.6 448.4 351.3 449.7 330.6 452.2 280.7 453.4 255.2 455.3 221.3 456.5 202.2 458.6 179.1 460.1 172.1 461.3 171.2 462.4 174.2 463.6 181.8 464.9 193.7 466.8 216.0 468.5 240.5 471.1 279.0 473.6 315.6 475.9 343.8 477.9 363.8 480.3 379.2 482.8 387.1 483.8 388.1 485.0 387.6 486.6 384.8 487.7 381.4 489.7 373.2 491.1 366.0 492.5 358.0 494.0 349.1 495.2 341.9 497.3 328.1 499.4 315.4 501.4 303.9 502.4 298.1 504.1 289.4 506.2 279.9 507.4 275.0 509.1 269.4 510.1 266.4 511.2 263.5 512.6 260.7 514.2 258.1 516.0 256.7 518.4 256.2 519.9 255.5 520.9 254.8 523.3 252.1 524.4 250.4 525.5 248.3 528.0 242.5 530.2 236.3 531.8 231.4 533.0 227.2 534.6 221.2 536.2 215.3 538.6 205.8 540.2 199.4 541.4 195.3 543.8 187.6 545.8 183.3 547.0 181.8 548.2 181.5 550.0 183.1 551.1 185.7 553.1 193.8 555.1 206.4 556.1 215.0 558.4 237.8 560.7 265.2 563.2 298.2 565.2 325.8 567.3 350.7 568.6 362.7 569.6 370.3 570.7 375.7 573.3 375.9 575.3 362.4 577.8 329.1 579.4 301.2 581.6 256.5 582.7 234.0 584.0 209.9 585.4 186.8 587.3 167.2 589.2 163.2 591.0 175.9 592.7 201.5 594.6 243.2 597.1 305.9 598.9 342.9 601.2 371.4 602.3 373.0 603.9 360.6 605.8 325.7 607.8 273.9 609.2 236.1 610.8 199.4 613.4 176.9 615.4 197.9 617.3 246.3 618.4 281.1 619.5 315.7 620.9 353.4 622.1 377.7 624.7 380.9 625.7 363.3 627.2 318.7 628.3 281.3 630.4 216.1 631.4 192.6 632.5 181.4 633.7 185.7 635.1 213.3 637.0 276.9 639.3 353.5 640.7 378.6 642.2 375.2 644.5 312.2 646.7 225.1 647.9 188.0 650.2 173.8 652.5 240.2 653.8 293.8 655.8 359.8 657.1 371.8 658.5 350.4 660.3 282.9 662.2 205.0 663.9 166.8 665.8 192.1 667.1 245.4 669.4 344.1 670.8 373.7 673.3 322.8 675.1 236.8 676.6 183.0 677.9 172.2 679.6 219.9 681.2 299.4 683.2 373.7 685.0 363.1 686.1 321.7 688.4 206.6 689.5 177.8 691.8 221.3 694.1 337.4 696.6 370.9 698.7 286.6 699.9 222.3 701.6 173.7 703.3 197.5 705.4 290.9 707.0 359.2 709.1 370.4 710.4 327.4 711.9 252.5 713.8 183.0 715.5 178.2 716.7 210.9 719.2 324.3 721.3 377.7 723.7 338.0 725.2 271.3 727.8 182.3 730.1 187.3 732.6 280.5 733.9 333.0 735.7 375.1 737.3 370.5 739.3 314.2 740.7 258.6 741.9 215.9 743.6 176.4 745.7 184.6 747.3 228.2 749.8 322.1 751.5 365.5 753.0 378.5 755.3 345.4 757.0 290.4 758.5 240.9 759.9 199.5 762.4 172.9 765.0 211.5 767.0 272.2 768.5 316.9 770.6 365.4 771.9 377.9 773.5 372.7 775.3 341.6 777.0 299.2 778.5 254.8 781.1 195.0 782.4 178.2 784.3 174.2 785.4 182.9 786.5 199.7 787.9 226.7 790.5 289.3 792.6 337.4 795.0 371.2 796.1 377.5 798.2 371.9 799.9 352.9 801.6 325.2 803.7 282.6 805.2 252.2 807.0 218.7 808.4 197.6 810.1 180.5 811.9 171.5 813.2 171.6 814.6 177.5 816.3 190.9 818.0 211.1 820.3 243.2 822.3 274.1 824.2 302.4 826.6 334.2 827.9 348.9 829.1 360.2 830.7 372.6 832.0 379.5 833.9 386.1 835.8 388.1 837.0 387.2 839.1 382.1 841.0 374.6 842.7 366.2 845.2 351.8 847.5 337.0 848.9 328.4 850.2 320.5 852.6 305.8 853.9 298.8 856.1 287.6 857.6 280.8 859.2 274.6 861.0 268.2 863.5 261.9 864.5 260.0 865.8 258.2 867.9 256.5 869.6 256.3 871.0 255.8 873.6 253.7 875.0 251.9 877.1 248.2 879.7 242.4 881.9 236.2 884.0 229.2 886.2 221.3 888.5 212.5 889.9 206.8 891.9 199.1 894.2 191.2 896.6 184.8 899.1 181.6 901.5 183.0 902.7 185.7 904.3 191.7 906.0 201.5 908.4 221.2 910.1 238.6 911.5 255.4 912.6 268.6 914.0 288.1 916.3 318.5 917.3 331.7 918.6 346.6 920.1 361.5 921.9 374.0 923.5 378.1 925.9 370.7 927.2 359.1 929.1 333.9 931.4 293.7 933.9 242.9 936.3 198.1 937.5 180.6 939.8 163.2 941.8 168.6 943.5 188.4 944.5 206.9 945.8 234.3 948.0 288.4 949.2 315.6 950.7 346.2 952.1 365.7 954.3 371.8 955.8 356.3 957.0 335.6 958.6 296.9 960.1 255.3 962.2 203.4 963.7 181.5 965.9 181.7 967.7 213.2 970.1 284.2 972.3 349.6 974.0 381.3 975.7 386.0 977.5 357.9 979.9 283.1 981.1 241.5 982.8 197.1 984.6 181.3 986.3 204.1 988.3 264.6 990.1 329.0 991.8 371.3 993.9 374.5 995.4 338.4 997.4 262.7 999.5 188.0 1000.7 170.0 1002.3 181.0 1004.8 266.1 1007.3 357.3 1009.9 356.3 1011.0 322.9 1013.3 223.0 1015.8 166.1 1018.2 223.2 1020.4 321.1 1022.5 373.8 1024.6 334.0 1026.5 245.3 1028.8 173.1 1030.6 194.7 1031.9 253.2 1033.1 311.9 1035.6 379.6 1037.8 318.9 1039.0 252.3 1041.4 175.5 1042.8 197.2 1044.9 293.2 1046.4 362.7 1047.8 377.4 1049.1 345.7 1050.2 292.8 1051.3 234.4 1052.4 189.9 1053.5 172.5 1055.9 235.8 1057.7 326.5 1058.9 367.9 1060.7 368.5 1062.6 298.1 1064.4 214.2 1065.7 177.2 1067.4 184.8 1069.8 278.7 1071.4 347.1 1073.2 378.5 1075.7 320.2 1077.1 259.7 1079.3 184.1 1081.0 176.5 1083.3 241.4 1084.9 307.7 1086.7 366.6 1088.3 377.2 1090.7 321.1 1093.2 225.5 1095.2 176.8 1097.8 195.6 1099.9 267.0 1102.3 346.8 1104.7 378.3 1106.1 362.5 1108.7 287.4 1110.3 232.2 1112.1 187.1 1113.4 173.2 1115.7 192.4 1117.3 230.7 1119.4 296.4 1120.7 335.2 1122.3 366.8 1123.9 378.5 1125.3 370.3 1126.3 353.8 1128.6 299.0 1131.1 229.2 1132.5 199.2 1133.7 180.6 1135.3 172.5 1136.4 177.1 1138.4 205.0 1140.0 239.3 1141.9 285.9 1144.4 340.2 1146.8 372.3 1149.2 375.5 1151.7 349.5 1153.7 315.5 1155.5 278.9 1156.5 257.2 1157.7 234.7 1159.5 204.3 1161.9 178.5 1163.6 171.4 1164.6 171.4 1165.9 176.0 1168.2 193.8 1169.4 208.3 1170.7 226.0 1172.2 247.5 1174.2 277.6 1176.5 311.8 1177.9 329.6 1179.8 351.7 1181.7 367.9 1183.4 378.6 1185.3 385.8 1187.6 388.1 1189.0 386.6 1190.7 382.0 1191.9 377.7 1193.7 369.2 1196.0 356.5 1198.6 340.4 1200.4 329.3 1201.8 320.0 1203.8 308.5 1205.3 299.5 1206.5 293.2 1208.4 284.4 1210.7 274.9 1213.1 267.0 1215.6 260.9 1217.2 258.4 1218.6 257.0 1219.8 256.4"/>
<path stroke="#ff0000" d="M48.4 220.3 48.6 218.8 48.9 216.5 49.2 213.8 49.5 211.0 49.9 208.2 50.3 205.8 50.8 204.0 51.3 203.1 52.0 203.0 52.7 203.7 53.5 205.3 54.4 207.6 55.4 210.7 56.5 214.6 56.9 216.0 57.3 217.7 57.7 219.6 58.1 221.7 58.6 224.0 59.1 226.4 59.6 228.8 60.1 231.4 60.6 233.9 61.1 236.5 61.6 239.0 62.1 241.5 62.6 243.8 63.1 246.1 63.6 248.1 64.0 250.0 64.5 251.6 64.9 253.0 65.3 254.1 65.7 254.8 66.5 255.2 67.2 254.1 67.9 251.9 68.5 249.0 69.1 245.7 69.7 242.6 70.2 239.9 70.8 238.1 71.4 237.6 71.9 238.1 72.3 239.0 72.7 240.4 73.1 242.2 73.4 244.3 73.8 246.6 74.3 249.0 74.7 251.6 75.3 254.1 75.9 256.7 76.6 259.1 77.1 260.9 77.7 263.1 78.4 265.6 79.1 268.3 79.8 271.1 80.5 274.0 81.3 276.9 82.0 279.7 82.8 282.3 83.6 284.6 84.4 286.7 85.2 288.3 85.9 289.5 86.7 290.1 87.4 290.0 88.1 289.3 88.4 288.6 88.8 287.7 89.1 286.6 89.4 285.3 89.7 283.8 90.1 282.2 90.4 280.3 90.7 278.3 91.0 276.2 91.4 274.0 91.7 271.7 92.0 269.3 92.3 266.8 92.6 264.2 93.0 261.6 93.3 259.0 93.6 256.4 93.9 253.7 94.2 251.1 94.5 248.5 94.8 245.9 95.1 243.4 95.4 240.9 95.7 238.5 96.0 236.3 96.3 234.1 96.6 232.1 96.8 230.2 97.1 228.4 97.4 226.8 97.7 225.4 97.9 224.2 98.2 223.2 99.8 220.0 101.3 220.9 102.6 224.2 103.9 228.0 105.3 230.4 107.0 231.2 108.5 231.5 110.3 232.3 112.5 234.7 113.3 236.1 114.2 238.1 115.1 240.4 116.0 243.1 117.0 245.9 118.0 248.7 119.1 251.5 120.1 254.0 121.2 256.2 122.3 258.0 123.4 259.1 124.4 259.5 125.5 259.1 126.1 258.4 126.7 257.5 127.3 256.2 127.9 254.6 128.5 252.8 129.1 250.8 129.7 248.6 130.4 246.2 131.0 243.7 131.7 241.2 132.3 238.5 132.9 235.8 133.6 233.2 134.2 230.5 134.8 227.9 135.4 225.4 136.0 223.0 136.6 220.7 137.2 218.6 137.7 216.7 138.3 215.0 138.8 213.6 139.3 212.5 139.8 211.7 141.0 210.8 142.0 211.2 143.0 212.6 143.8 214.9 144.7 217.7 145.5 220.7 146.4 223.8 147.3 226.7 148.4 229.0 149.4 230.9 150.5 232.9 151.6 235.0 152.7 237.2 153.8 239.3 155.0 241.3 156.2 243.2 157.5 245.0 158.7 246.4 160.0 247.6 161.9 248.6 164.0 248.9 166.1 248.8 168.2 248.5 170.3 248.2 172.4 248.4 174.3 249.1 175.7 250.0 177.1 251.1 178.4 252.4 179.8 253.8 181.0 255.3 182.3 257.1 183.5 259.0 184.7 261.1 185.8 263.4 186.5 264.9 187.1 266.4 187.7 268.1 188.3 269.8 188.8 271.6 189.4 273.5 189.9 275.4 190.5 277.4 191.0 279.4 191.5 281.4 192.1 283.5 192.6 285.7 193.2 287.8 193.8 290.0 194.4 292.2 194.9 294.0 195.4 295.8 195.9 297.6 196.4 299.5 196.9 301.4 197.5 303.3 198.0 305.3 198.5 307.2 199.0 309.2 199.6 311.2 200.1 313.3 200.7 315.3 201.2 317.3 201.7 319.4 202.3 321.4 202.8 323.4 203.3 325.5 203.9 327.5 204.4 329.5 204.9 331.5 205.4 333.7 205.9 336.1 206.5 338.5 207.0 341.1 207.5 343.7 208.1 346.4 208.6 349.0 209.1 351.7 209.7 354.2 210.2 356.6 210.7 358.9 211.2 361.0 211.7 362.9 212.2 364.6 212.7 366.0 213.1 367.1 213.6 367.9 214.0 368.3 214.4 368.3 214.7 368.0 215.1 367.4 215.4 366.5 215.6 365.4 215.9 364.0 216.2 362.4 216.4 360.7 216.7 358.8 216.9 356.7 217.1 354.4 217.4 352.1 217.6 349.7 217.8 347.1 218.0 344.5 218.2 341.9 218.5 339.2 218.7 336.5 218.9 333.8 219.2 331.1 219.4 328.4 219.7 325.8 219.9 323.3 220.2 320.9 220.4 319.1 220.6 317.2 220.9 315.2 221.1 313.2 221.3 311.1 221.5 308.9 221.8 306.7 222.0 304.5 222.3 302.2 222.5 299.9 222.8 297.6 223.0 295.3 223.3 292.9 223.5 290.6 223.8 288.3 224.0 286.0 224.3 283.7 224.5 281.5 224.8 279.3 225.0 277.2 225.2 275.1 225.5 273.1 225.7 271.1 225.9 269.3 226.2 267.5 226.4 265.8 226.6 264.2 226.8 262.8 227.0 261.4 227.2 260.2 227.4 259.1 229.2 256.2 231.7 257.7 232.4 256.7 233.1 255.6 234.0 254.4 234.9 253.0 235.9 251.6 236.9 250.0 238.0 248.3 239.0 246.5 240.1 244.5 241.1 242.3 242.1 240.0 243.0 237.4 243.8 234.7 244.6 231.8 244.9 230.3 245.3 228.6 245.6 226.7 245.9 224.7 246.2 222.6 246.4 220.4 246.7 218.2 247.0 215.8 247.2 213.4 247.5 210.9 247.7 208.4 247.9 205.9 248.1 203.3 248.4 200.8 248.6 198.3 248.8 195.8 249.0 193.4 249.2 191.0 249.4 188.8 249.7 186.5 249.9 184.4 250.1 182.5 250.3 180.6 250.5 178.9 250.8 177.3 251.0 175.9 251.3 174.7 251.5 173.7 251.8 172.9 252.6 171.5 253.4 171.4 254.3 172.2 255.1 173.8 256.0 176.1 256.9 178.9 257.8 182.1 258.7 185.3 259.5 188.6 260.4 191.6 260.9 193.2 261.3 195.0 261.8 197.0 262.3 199.2 262.8 201.4 263.3 203.8 263.8 206.2 264.3 208.7 264.8 211.1 265.2 213.6 265.7 216.0 266.2 218.3 266.6 220.5 267.1 222.7 267.5 224.6 267.9 226.4 268.3 228.0 268.7 229.3 269.0 230.4 271.2 230.8 272.8 227.5 273.5 227.7 274.1 228.0 274.9 230.2 276.2 236.1 276.4 237.3 276.7 238.8 277.0 240.4 277.3 242.2 277.6 244.2 277.9 246.3 278.3 248.5 278.6 250.8 279.0 253.2 279.4 255.7 279.7 258.2 280.1 260.7 280.5 263.3 280.9 265.9 281.3 268.5 281.7 271.0 282.1 273.5 282.5 275.9 282.9 278.2 283.3 280.5 283.6 282.6 284.0 284.6 284.4 286.5 284.7 288.2 285.1 289.7 285.4 291.0 285.7 292.1 286.0 293.0 286.3 293.6 286.8 294.1 287.3 293.7 287.8 292.5 288.2 290.6 288.7 288.1 289.0 285.3 289.4 282.2 289.8 279.0 290.1 275.8 290.5 272.8 290.9 270.0 291.2 267.7 291.6 266.0 292.0 264.9 293.2 264.5 294.4 266.5 295.5 269.6 296.7 272.7 297.8 274.9 300.2 280.2 302.6 277.8 302.8 276.7 303.0 275.4 303.2 273.9 303.4 272.1 303.6 270.2 303.7 268.2 303.9 266.0 304.1 263.7 304.3 261.3 304.5 258.9 304.7 256.3 304.9 253.8 305.1 251.2 305.3 248.7 305.5 246.1 305.7 243.7 305.9 241.2 306.1 238.9 306.3 236.7 306.5 234.6 306.8 232.6 307.0 230.9 307.3 229.3 307.5 227.9 307.8 226.7 309.8 223.6 312.1 224.9 314.4 226.8 316.4 225.5 316.8 224.2 317.2 222.6 317.5 220.7 317.8 218.4 318.1 216.0 318.4 213.5 318.7 210.8 319.0 208.2 319.2 205.6 319.5 203.0 319.8 200.6 320.1 198.5 320.4 196.5 320.8 195.0 321.2 193.8 321.6 193.0 322.5 192.8 323.5 193.7 324.6 195.6 325.8 198.0 326.9 200.8 328.1 203.5 329.1 206.0 330.0 207.9 330.8 208.9 332.1 207.1 332.8 202.7 333.7 201.7 334.1 202.7 334.6 204.2 335.1 206.1 335.7 208.4 336.3 210.8 336.8 213.4 337.4 216.0 338.0 218.5 338.5 220.9 339.0 223.0 339.4 224.7 340.1 227.7 340.7 230.2 341.2 232.1 341.6 233.6 342.2 234.7 343.7 231.9 345.9 233.3 346.2 234.5 346.5 235.9 346.8 237.6 347.2 239.6 347.5 241.7 347.9 244.0 348.3 246.5 348.7 249.1 349.1 251.7 349.6 254.3 350.0 257.0 350.4 259.6 350.8 262.2 351.2 264.6 351.6 267.0 352.0 269.2 352.4 271.1 352.7 272.9 353.1 274.4 353.4 275.5 353.7 276.4 354.5 277.0 355.0 275.2 355.5 272.0 356.0 268.2 356.5 264.6 357.2 262.3 358.0 262.0 358.5 262.8 359.0 264.2 359.6 266.0 360.2 268.3 360.9 270.8 361.5 273.5 362.2 276.4 362.9 279.2 363.6 281.9 364.2 284.4 364.9 286.7 365.5 288.5 366.1 289.8 366.7 290.6 367.2 290.7 367.6 290.2 367.9 289.2 368.3 287.8 368.6 285.9 368.8 283.8 369.1 281.4 369.4 278.8 369.6 276.1 369.8 273.2 370.1 270.4 370.3 267.5 370.6 264.8 370.8 262.2 371.1 259.8 371.4 257.6 371.7 255.8 372.0 254.4 372.4 253.4 373.7 253.0 375.1 255.2 376.6 258.8 378.2 262.4 379.7 264.3 381.0 263.4 381.3 262.4 381.6 261.2 381.9 259.6 382.2 257.8 382.5 255.8 382.8 253.6 383.0 251.2 383.3 248.7 383.5 246.1 383.8 243.5 384.0 240.8 384.3 238.1 384.5 235.5 384.8 232.9 385.0 230.5 385.3 228.2 385.6 226.0 385.9 224.1 386.2 222.3 386.6 220.9 386.9 219.7 387.3 218.9 388.3 218.2 389.5 219.1 390.8 221.2 392.1 224.0 393.5 227.1 394.8 230.2 396.1 232.7 397.2 234.4 398.2 234.7 398.8 233.8 399.3 232.0 399.7 229.5 400.0 226.6 400.3 223.3 400.5 220.0 400.8 216.8 401.2 214.0 401.6 211.7 402.0 210.2 402.6 209.6 403.4 210.3 403.8 211.0 404.2 212.0 404.6 213.3 405.1 214.7 405.6 216.5 406.1 218.4 406.7 220.4 407.2 222.7 407.8 225.0 408.4 227.5 409.0 230.0 409.6 232.7 410.2 235.3 410.9 238.0 411.5 240.7 412.1 243.4 412.7 246.0 413.3 248.6 413.9 251.1 414.5 253.5 415.1 255.8 415.6 257.9 416.1 259.8 416.6 261.6 417.1 263.1 417.5 264.5 417.9 265.5 418.3 266.3 419.1 267.0 419.7 265.9 420.1 263.4 420.4 260.0 420.6 256.2 420.9 252.3 421.2 248.9 421.6 246.5 422.3 245.4 423.2 246.2 423.6 247.0 424.0 248.1 424.5 249.5 425.0 251.2 425.5 253.1 426.0 255.2 426.6 257.5 427.1 259.9 427.7 262.5 428.3 265.2 429.0 268.0 429.6 270.8 430.2 273.7 430.9 276.6 431.6 279.4 432.2 282.3 432.9 285.0 433.5 287.7 434.2 290.2 434.8 292.6 435.4 294.8 436.1 296.9 436.7 298.7 437.3 300.3 437.8 301.6 438.4 302.6 438.9 303.3 439.4 303.7 439.9 303.7 440.3 303.4 440.7 302.8 441.0 301.9 441.4 300.8 441.7 299.5 442.0 298.0 442.3 296.3 442.6 294.3 442.9 292.3 443.2 290.0 443.5 287.7 443.7 285.2 444.0 282.6 444.2 280.0 444.5 277.3 444.8 274.5 445.0 271.7 445.3 268.9 445.5 266.1 445.8 263.3 446.0 260.5 446.3 257.8 446.6 255.1 446.8 252.5 447.1 250.0 447.4 247.7 447.7 245.4 448.0 243.3 448.3 241.4 448.6 239.6 448.9 238.1 449.3 236.7 449.6 235.6 450.0 234.7 451.2 233.0 452.6 232.5 454.0 233.0 455.5 234.3 457.1 236.3 458.6 238.8 460.2 241.6 461.7 244.4 463.1 247.3 464.5 249.8 465.7 252.0 466.7 253.8 467.6 255.9 468.4 258.3 469.3 260.9 470.1 263.5 470.8 266.1 471.6 268.6 472.3 270.9 473.0 272.9 473.7 274.5 474.4 275.7 475.1 276.4 475.8 276.4 476.3 275.9 476.9 275.1 477.4 273.9 478.0 272.4 478.5 270.6 479.0 268.6 479.5 266.4 480.0 264.0 480.5 261.6 481.0 259.1 481.5 256.6 482.0 254.1 482.5 251.6 483.0 249.3 483.5 247.1 483.9 245.1 484.4 243.3 485.0 240.9 485.6 238.3 486.2 235.8 486.7 233.2 487.2 230.7 487.8 228.3 488.3 226.1 488.9 224.2 489.5 222.6 490.1 221.4 490.8 220.6 491.5 220.3 492.3 220.6 493.2 221.6 494.1 223.0 495.1 224.8 496.1 227.0 497.2 229.4 498.2 231.9 499.2 234.5 500.2 237.0 501.2 239.4 502.1 241.5 503.0 243.3 504.2 245.7 505.3 248.1 506.3 250.3 507.3 252.5 508.3 254.4 509.3 256.2 510.4 257.8 511.6 259.1 513.7 260.3 516.0 260.7 518.4 260.7 520.8 261.0 523.1 262.0 524.5 263.0 526.0 264.1 527.4 265.4 528.9 266.8 530.3 268.5 531.7 270.3 533.2 272.5 534.6 274.9 535.4 276.3 536.1 277.8 536.9 279.3 537.7 280.8 538.4 282.5 539.2 284.2 540.0 286.0 540.7 287.8 541.5 289.8 542.3 291.8 543.0 294.0 543.8 296.2 544.6 298.6 545.3 301.1 546.1 303.7 546.5 305.3 547.0 307.0 547.4 308.8 547.9 310.7 548.4 312.6 548.8 314.6 549.3 316.7 549.8 318.8 550.2 320.9 550.7 323.1 551.1 325.3 551.6 327.5 552.1 329.7 552.5 332.0 553.0 334.2 553.4 336.4 553.9 338.5 554.3 340.6 554.8 342.7 555.2 344.8 555.6 346.7 556.0 348.6 556.4 350.5 556.8 352.2 557.2 353.9 557.6 355.4 558.3 358.5 559.0 361.7 559.7 364.9 560.4 368.1 561.0 371.2 561.6 374.0 562.2 376.6 562.8 378.8 563.4 380.5 563.9 381.7 564.5 382.3 565.0 382.2 565.6 381.3 565.8 380.6 566.1 379.8 566.3 378.7 566.5 377.5 566.8 376.2 567.0 374.7 567.2 373.0 567.4 371.3 567.6 369.4 567.8 367.4 568.0 365.3 568.2 363.1 568.4 360.9 568.7 358.6 568.9 356.2 569.1 353.8 569.3 351.4 569.5 348.9 569.7 346.4 569.9 343.9 570.1 341.4 570.3 338.9 570.5 336.5 570.7 334.1 570.9 331.7 571.1 329.4 571.3 327.2 571.6 325.0 571.8 322.9 572.0 320.9 572.2 318.8 572.5 316.6 572.7 314.4 573.0 312.2 573.3 309.9 573.5 307.6 573.8 305.3 574.1 303.0 574.3 300.7 574.6 298.3 574.9 296.0 575.1 293.7 575.4 291.5 575.7 289.2 575.9 287.0 576.2 284.9 576.5 282.7 576.7 280.7 577.0 278.7 577.3 276.8 577.5 275.0 577.8 273.2 578.0 271.6 578.2 270.0 578.5 268.5 578.7 267.2 578.9 266.0 579.1 264.9 581.0 262.1 583.4 263.4 584.1 262.4 584.9 261.3 585.8 260.1 586.8 258.8 587.8 257.3 588.8 255.7 589.9 253.9 591.0 251.8 592.0 249.5 593.1 246.8 594.1 243.8 595.0 240.5 595.3 239.1 595.7 237.4 596.0 235.7 596.4 233.8 596.7 231.8 597.0 229.7 597.4 227.5 597.7 225.2 598.0 222.8 598.3 220.4 598.7 217.9 599.0 215.4 599.3 212.9 599.6 210.4 599.9 207.9 600.3 205.4 600.6 202.9 600.9 200.5 601.2 198.1 601.5 195.8 601.8 193.6 602.1 191.5 602.5 189.5 602.8 187.6 603.1 185.8 603.4 184.2 603.7 182.7 604.0 181.4 604.4 180.3 604.7 179.4 605.0 178.7 605.8 177.7 606.6 177.6 607.4 178.3 608.2 179.7 609.0 181.5 609.9 183.9 610.7 186.5 611.5 189.4 612.2 192.3 613.0 195.3 613.7 198.2 614.4 200.8 615.0 203.1 615.5 205.0 616.0 207.1 616.5 209.3 616.9 211.6 617.3 214.0 617.7 216.4 618.1 218.8 618.4 221.2 618.8 223.4 619.1 225.6 619.5 227.6 619.8 229.4 620.1 231.0 620.5 232.3 620.8 233.3 622.0 231.9 623.1 226.7 625.1 229.0 625.4 230.0 625.7 231.3 626.0 232.7 626.3 234.3 626.7 236.1 627.1 238.0 627.5 240.1 627.9 242.2 628.3 244.5 628.7 246.9 629.1 249.3 629.6 251.9 630.0 254.4 630.5 257.0 630.9 259.6 631.4 262.2 631.9 264.8 632.3 267.4 632.8 269.9 633.2 272.4 633.7 274.8 634.1 277.1 634.6 279.3 635.0 281.4 635.4 283.3 635.8 285.2 636.2 286.8 636.6 288.3 636.9 289.6 637.3 290.7 637.6 291.6 637.9 292.2 638.5 292.8 639.0 292.5 639.4 291.4 639.8 289.7 640.2 287.5 640.5 284.8 640.8 281.8 641.1 278.7 641.4 275.5 641.7 272.3 642.0 269.4 642.4 266.8 642.8 264.6 643.2 263.0 643.7 262.0 644.8 262.0 646.0 263.7 647.3 266.5 648.7 269.7 650.1 272.8 651.4 275.1 652.6 276.0 653.7 274.9 654.0 274.0 654.3 272.9 654.6 271.5 654.8 269.9 655.1 268.2 655.3 266.2 655.5 264.1 655.8 261.9 656.0 259.6 656.2 257.2 656.4 254.7 656.6 252.2 656.8 249.6 657.0 247.0 657.2 244.5 657.4 242.0 657.6 239.6 657.8 237.2 658.0 235.0 658.2 232.8 658.5 230.8 658.7 229.0 659.0 227.4 659.2 225.9 659.5 224.7 661.6 221.0 663.9 221.3 666.2 222.2 668.1 220.3 668.5 218.9 668.8 217.1 669.1 214.9 669.4 212.5 669.6 210.0 669.9 207.3 670.1 204.5 670.3 201.8 670.5 199.1 670.7 196.6 670.9 194.3 671.2 192.3 671.6 190.7 672.0 189.4 672.4 188.7 673.2 188.6 674.2 189.5 675.2 191.2 676.4 193.4 677.5 196.0 678.7 198.7 679.8 201.3 680.9 203.5 681.8 205.2 682.5 206.0 683.4 205.0 683.9 201.7 684.1 197.8 684.5 195.3 685.3 195.9 685.6 196.8 686.0 198.0 686.4 199.6 686.9 201.4 687.3 203.5 687.8 205.7 688.3 208.0 688.9 210.5 689.4 213.1 690.0 215.6 690.5 218.2 691.0 220.7 691.5 223.1 692.0 225.3 692.5 227.4 692.9 229.3 693.3 230.9 693.7 232.3 694.0 233.3 695.0 232.8 695.3 227.4 696.3 227.5 696.6 228.5 696.9 229.8 697.2 231.4 697.6 233.1 698.0 235.1 698.4 237.3 698.9 239.6 699.3 242.0 699.8 244.5 700.3 247.0 700.8 249.6 701.3 252.1 701.7 254.6 702.2 257.1 702.7 259.4 703.2 261.7 703.6 263.7 704.0 265.6 704.4 267.2 704.8 268.7 705.2 269.8 705.5 270.6 706.3 271.2 707.0 269.5 707.5 266.3 707.9 262.5 708.4 259.0 709.0 256.7 709.8 256.3 710.3 257.1 710.8 258.6 711.4 260.6 712.0 263.0 712.7 265.6 713.3 268.5 714.0 271.4 714.7 274.2 715.4 276.9 716.0 279.3 716.7 281.3 717.3 282.7 717.9 283.5 718.4 283.6 718.8 283.1 719.1 282.0 719.5 280.6 719.8 278.8 720.1 276.6 720.4 274.2 720.7 271.6 721.0 268.9 721.2 266.1 721.5 263.2 721.8 260.4 722.1 257.7 722.4 255.1 722.7 252.7 723.0 250.5 723.4 248.7 723.7 247.2 724.1 246.2 725.4 245.6 726.9 247.5 728.4 250.8 729.9 253.9 731.4 255.7 732.8 254.8 733.2 253.8 733.5 252.6 733.8 251.0 734.1 249.2 734.4 247.2 734.7 244.9 735.0 242.6 735.3 240.1 735.6 237.6 735.8 235.0 736.1 232.3 736.4 229.8 736.7 227.2 737.0 224.8 737.3 222.5 737.6 220.3 737.9 218.4 738.3 216.6 738.6 215.2 739.0 214.0 739.4 213.2 740.6 212.6 741.9 213.8 743.3 216.2 744.8 219.3 746.2 222.5 747.6 225.3 748.9 227.2 750.0 227.5 750.6 226.6 751.1 224.7 751.6 222.2 752.0 219.3 752.4 216.0 752.7 212.7 753.1 209.5 753.4 206.7 753.9 204.5 754.4 203.0 755.0 202.4 755.7 203.1 756.0 203.8 756.4 204.8 756.8 206.0 757.2 207.5 757.7 209.2 758.1 211.1 758.6 213.2 759.1 215.4 759.6 217.8 760.1 220.2 760.6 222.8 761.1 225.4 761.7 228.1 762.2 230.7 762.7 233.4 763.3 236.1 763.8 238.7 764.3 241.3 764.8 243.8 765.3 246.2 765.8 248.5 766.3 250.6 766.7 252.5 767.2 254.3 767.6 255.9 768.0 257.2 768.4 258.3 768.7 259.1 769.6 260.1 770.4 259.1 771.1 256.8 771.7 253.5 772.2 249.8 772.7 246.2 773.2 243.1 773.7 241.0 774.3 240.5 774.7 241.0 775.1 242.0 775.5 243.4 775.9 245.1 776.3 247.1 776.6 249.3 777.0 251.6 777.4 254.1 777.9 256.7 778.4 259.2 778.9 261.7 779.5 264.1 780.1 266.3 780.7 268.3 781.4 270.7 782.1 273.4 782.8 276.2 783.6 279.2 784.4 282.2 785.2 285.1 786.0 287.8 786.8 290.3 787.7 292.4 788.5 294.1 789.3 295.4 790.1 296.0 790.9 295.9 791.6 295.1 791.9 294.4 792.3 293.5 792.6 292.4 792.9 291.0 793.2 289.5 793.6 287.8 793.9 286.0 794.2 284.0 794.5 281.9 794.9 279.7 795.2 277.3 795.5 274.9 795.8 272.4 796.2 269.9 796.5 267.3 796.8 264.6 797.1 262.0 797.4 259.3 797.7 256.7 798.0 254.1 798.3 251.5 798.6 249.0 798.9 246.6 799.2 244.2 799.5 241.9 799.8 239.8 800.1 237.8 800.3 235.9 800.6 234.1 800.9 232.6 801.1 231.2 801.4 230.0 801.6 229.0 802.9 225.9 803.9 226.9 804.9 230.4 805.9 234.5 807.4 237.6 808.6 238.8 809.9 240.0 811.4 241.2 812.9 242.4 814.4 243.8 816.0 245.3 817.5 247.1 818.9 249.1 819.8 250.9 820.6 253.2 821.4 255.9 822.2 258.8 823.0 261.8 823.7 264.7 824.5 267.4 825.3 269.8 826.1 271.5 827.0 272.6 827.9 272.9 828.9 272.1 829.3 271.4 829.8 270.4 830.3 269.1 830.7 267.6 831.2 265.9 831.7 264.0 832.2 262.0 832.7 259.7 833.3 257.4 833.8 254.9 834.3 252.4 834.8 249.8 835.4 247.1 835.9 244.4 836.5 241.8 837.0 239.1 837.5 236.6 838.1 234.0 838.6 231.6 839.2 229.3 839.7 227.1 840.2 225.1 840.8 223.2 841.3 221.6 841.8 220.2 842.3 219.0 842.8 218.1 843.3 217.5 844.2 217.0 845.1 217.3 846.0 218.2 847.0 219.6 847.9 221.5 848.8 223.8 849.7 226.4 850.6 229.1 851.4 232.0 852.3 234.8 853.1 237.6 853.9 240.2 854.7 242.6 855.5 244.6 856.2 246.2 857.6 248.8 858.8 250.9 859.9 252.7 860.9 254.2 862.0 255.4 863.3 256.6 864.8 257.7 866.6 258.6 868.6 259.0 870.7 259.3 872.9 259.5 875.1 259.9 877.2 260.7 879.2 262.0 880.5 263.2 881.6 264.3 882.8 265.6 883.9 267.0 885.0 268.6 886.0 270.4 887.1 272.4 888.3 274.8 889.4 277.5 890.7 280.7 891.2 282.1 891.8 283.6 892.3 285.3 892.9 287.0 893.5 288.8 894.1 290.7 894.7 292.7 895.3 294.7 895.9 296.8 896.5 298.9 897.2 301.0 897.8 303.2 898.4 305.4 899.0 307.6 899.6 309.8 900.2 312.0 900.8 314.1 901.4 316.2 902.0 318.3 902.5 320.4 903.1 322.3 903.6 324.3 904.1 326.1 904.6 327.8 905.1 329.5 905.8 332.0 906.5 334.4 907.1 336.7 907.8 338.9 908.4 341.1 908.9 343.2 909.5 345.3 910.0 347.3 910.6 349.2 911.1 351.1 911.5 352.9 912.0 354.6 912.4 356.3 912.9 358.0 913.3 359.5 913.7 361.1 914.4 364.5 915.0 368.2 915.5 371.9 916.0 375.3 916.4 378.0 916.8 379.7 917.3 379.9 917.9 378.4 918.1 377.6 918.3 376.6 918.4 375.4 918.6 374.1 918.8 372.6 919.0 371.0 919.2 369.3 919.4 367.4 919.6 365.5 919.8 363.4 920.0 361.2 920.2 359.0 920.4 356.7 920.7 354.3 920.9 351.9 921.1 349.5 921.3 347.0 921.5 344.5 921.7 342.0 921.9 339.5 922.1 337.0 922.3 334.6 922.6 332.1 922.8 329.8 923.0 327.4 923.2 325.2 923.4 323.0 923.6 320.9 923.8 318.8 924.0 316.7 924.2 314.5 924.4 312.2 924.6 309.9 924.9 307.6 925.1 305.2 925.3 302.8 925.5 300.5 925.7 298.1 925.9 295.7 926.2 293.3 926.4 291.0 926.6 288.6 926.8 286.4 927.0 284.1 927.2 281.9 927.4 279.8 927.6 277.7 927.8 275.7 928.1 273.8 928.3 272.0 928.5 270.3 928.6 268.7 928.8 267.2 929.0 265.8 929.2 264.5 929.4 263.4 931.1 260.4 933.7 262.0 934.5 261.0 935.4 260.0 936.4 259.0 937.5 257.8 938.6 256.5 939.8 255.0 941.0 253.3 942.2 251.4 943.4 249.2 944.5 246.6 945.6 243.8 946.6 240.5 947.0 239.1 947.3 237.5 947.7 235.7 948.1 233.9 948.4 231.9 948.8 229.8 949.1 227.6 949.4 225.3 949.8 222.9 950.1 220.5 950.5 218.0 950.8 215.5 951.1 213.0 951.4 210.5 951.8 208.0 952.1 205.5 952.4 203.0 952.7 200.6 953.0 198.2 953.3 195.9 953.7 193.7 954.0 191.5 954.3 189.5 954.6 187.6 954.9 185.8 955.2 184.2 955.5 182.7 955.8 181.4 956.1 180.3 956.4 179.4 956.7 178.7 957.5 177.7 958.2 177.7 959.0 178.6 959.7 180.3 960.5 182.5 961.2 185.2 961.9 188.3 962.6 191.5 963.3 194.7 964.0 197.8 964.6 200.6 965.3 203.1 965.9 205.1 966.4 207.2 967.0 209.5 967.5 211.8 968.1 214.1 968.6 216.5 969.2 218.9 969.7 221.2 970.2 223.4 970.7 225.5 971.2 227.4 971.6 229.1 972.1 230.6 972.5 231.8 974.3 230.6 976.8 233.3 977.1 234.4 977.4 235.8 977.8 237.3 978.1 239.1 978.5 241.0 978.9 243.0 979.4 245.2 979.8 247.5 980.3 249.9 980.7 252.3 981.2 254.9 981.7 257.5 982.2 260.1 982.7 262.7 983.2 265.3 983.7 268.0 984.1 270.5 984.6 273.1 985.1 275.5 985.6 277.9 986.1 280.2 986.5 282.4 987.0 284.4 987.4 286.3 987.9 288.0 988.3 289.6 988.7 290.9 989.0 292.0 989.4 292.9 989.7 293.6 990.3 294.2 990.9 293.8 991.3 292.6 991.8 290.7 992.1 288.3 992.5 285.4 992.8 282.3 993.1 279.1 993.4 275.8 993.7 272.8 994.1 270.0 994.5 267.7 995.0 265.9 995.5 264.9 996.7 265.0 998.2 267.1 999.7 270.3 1001.3 273.7 1002.8 276.4 1004.3 277.6 1005.5 276.4 1005.8 275.5 1006.1 274.3 1006.4 272.9 1006.6 271.3 1006.9 269.5 1007.1 267.5 1007.3 265.4 1007.6 263.1 1007.8 260.8 1008.0 258.3 1008.2 255.8 1008.4 253.3 1008.6 250.7 1008.8 248.1 1009.0 245.6 1009.2 243.1 1009.4 240.6 1009.6 238.3 1009.8 236.0 1010.0 233.9 1010.3 232.0 1010.5 230.2 1010.8 228.6 1011.0 227.2 1011.3 226.1 1013.4 223.3 1015.7 224.9 1018.0 227.1 1019.9 226.1 1020.3 224.8 1020.7 223.1 1021.0 221.0 1021.2 218.7 1021.5 216.1 1021.7 213.4 1021.9 210.6 1022.2 207.8 1022.4 205.1 1022.6 202.6 1022.9 200.3 1023.1 198.2 1023.4 196.5 1023.8 195.3 1024.2 194.5 1025.0 194.4 1025.9 195.6 1026.9 197.6 1028.0 200.3 1029.0 203.2 1030.1 206.2 1031.1 208.8 1032.0 210.7 1032.8 211.7 1033.8 210.7 1034.6 207.5 1035.2 203.7 1035.9 201.2 1037.1 201.7 1037.5 202.6 1038.0 203.9 1038.5 205.5 1039.1 207.3 1039.7 209.4 1040.3 211.7 1040.9 214.1 1041.6 216.6 1042.2 219.2 1042.9 221.8 1043.5 224.3 1044.2 226.8 1044.8 229.2 1045.3 231.3 1045.9 233.3 1046.4 235.1 1046.8 236.5 1047.2 237.6 1048.8 235.9 1050.1 234.7 1050.4 235.8 1050.7 237.2 1051.0 238.9 1051.3 240.9 1051.6 243.0 1052.0 245.4 1052.4 247.8 1052.8 250.4 1053.2 253.0 1053.6 255.6 1054.0 258.2 1054.4 260.8 1054.7 263.3 1055.1 265.6 1055.5 267.8 1055.9 269.8 1056.2 271.5 1056.6 273.0 1056.9 274.1 1057.2 274.9 1057.9 275.3 1058.4 273.9 1058.9 271.2 1059.3 267.8 1059.8 264.3 1060.3 261.3 1060.9 259.4 1061.6 259.1 1062.1 259.9 1062.6 261.3 1063.2 263.3 1063.8 265.7 1064.4 268.3 1065.1 271.2 1065.8 274.1 1066.4 277.0 1067.1 279.7 1067.8 282.1 1068.4 284.1 1069.0 285.6 1069.6 286.5 1070.1 286.6 1070.5 286.1 1070.8 285.1 1071.2 283.7 1071.5 282.0 1071.8 279.9 1072.1 277.6 1072.3 275.1 1072.6 272.4 1072.9 269.7 1073.2 266.9 1073.4 264.2 1073.7 261.5 1074.0 259.0 1074.3 256.7 1074.7 254.7 1075.0 252.9 1075.4 251.6 1075.8 250.6 1077.2 250.2 1078.9 252.6 1080.6 256.2 1082.3 259.7 1083.9 261.6 1085.3 260.7 1085.6 259.7 1085.9 258.5 1086.1 256.9 1086.4 255.1 1086.6 253.0 1086.8 250.8 1087.0 248.4 1087.1 245.9 1087.3 243.3 1087.5 240.6 1087.6 237.9 1087.8 235.3 1088.0 232.6 1088.1 230.1 1088.3 227.6 1088.5 225.3 1088.7 223.1 1089.0 221.2 1089.2 219.5 1089.5 218.0 1089.8 216.9 1090.2 216.1 1091.1 215.5 1092.2 216.3 1093.4 218.1 1094.7 220.6 1096.0 223.5 1097.3 226.5 1098.6 229.3 1099.8 231.6 1100.8 233.1 1101.7 233.4 1102.3 232.6 1102.7 230.8 1103.0 228.4 1103.3 225.4 1103.5 222.1 1103.7 218.8 1103.9 215.6 1104.1 212.7 1104.4 210.4 1104.8 208.9 1105.3 208.3 1106.0 208.9 1106.4 209.6 1106.7 210.5 1107.2 211.8 1107.6 213.2 1108.1 214.9 1108.6 216.7 1109.1 218.8 1109.6 220.9 1110.2 223.2 1110.7 225.7 1111.3 228.2 1111.9 230.7 1112.5 233.3 1113.1 236.0 1113.7 238.6 1114.3 241.2 1114.9 243.8 1115.4 246.3 1116.0 248.8 1116.6 251.1 1117.1 253.3 1117.7 255.4 1118.2 257.3 1118.7 259.0 1119.2 260.5 1119.6 261.8 1120.0 262.8 1120.4 263.6 1121.3 264.3 1122.0 263.1 1122.6 260.6 1123.0 257.3 1123.4 253.4 1123.8 249.6 1124.3 246.2 1124.9 243.8 1125.7 242.7 1126.7 243.4 1127.1 244.2 1127.6 245.3 1128.0 246.6 1128.5 248.3 1129.0 250.1 1129.6 252.2 1130.2 254.4 1130.7 256.8 1131.3 259.3 1131.9 262.0 1132.6 264.7 1133.2 267.5 1133.8 270.3 1134.5 273.1 1135.1 275.9 1135.8 278.7 1136.4 281.4 1137.1 284.0 1137.7 286.4 1138.4 288.8 1139.0 291.0 1139.6 293.0 1140.2 294.7 1140.8 296.3 1141.3 297.5 1141.9 298.5 1142.4 299.2 1142.9 299.5 1143.4 299.5 1143.8 299.2 1144.2 298.6 1144.5 297.7 1144.9 296.6 1145.3 295.3 1145.6 293.8 1145.9 292.1 1146.3 290.2 1146.6 288.1 1146.9 285.9 1147.2 283.6 1147.5 281.1 1147.8 278.6 1148.1 276.0 1148.4 273.3 1148.7 270.6 1149.0 267.8 1149.2 265.0 1149.5 262.2 1149.8 259.4 1150.0 256.7 1150.3 253.9 1150.6 251.3 1150.8 248.7 1151.1 246.2 1151.4 243.8 1151.6 241.6 1151.9 239.5 1152.2 237.5 1152.4 235.7 1152.7 234.1 1153.0 232.7 1153.2 231.5 1153.5 230.5 1154.8 227.9 1156.1 228.0 1157.3 229.9 1158.5 232.9 1159.7 236.5 1160.9 239.7 1162.1 242.0 1163.5 243.6 1165.0 245.0 1166.4 246.4 1167.9 247.9 1169.4 249.8 1170.8 252.1 1171.6 253.9 1172.3 256.4 1173.0 259.2 1173.6 262.3 1174.3 265.5 1175.0 268.4 1175.7 271.0 1176.5 273.0 1177.4 274.3 1178.3 274.5 1179.4 273.6 1179.8 272.9 1180.3 271.8 1180.7 270.6 1181.2 269.1 1181.7 267.4 1182.2 265.5 1182.7 263.4 1183.2 261.2 1183.7 258.9 1184.3 256.5 1184.8 253.9 1185.4 251.4 1185.9 248.7 1186.5 246.1 1187.0 243.4 1187.6 240.8 1188.2 238.2 1188.8 235.6 1189.4 233.2 1189.9 230.8 1190.5 228.6 1191.1 226.5 1191.7 224.5 1192.3 222.8 1192.9 221.2 1193.5 219.9 1194.0 218.8 1194.6 218.0 1195.2 217.5 1196.1 217.2 1197.0 217.5 1198.0 218.2 1198.9 219.4 1199.9 220.9 1200.9 222.8 1201.9 224.9 1202.9 227.2 1203.9 229.7 1204.9 232.3 1205.9 235.0 1206.8 237.7 1207.7 240.3 1208.6 242.8 1209.5 245.2 1210.3 247.4 1211.1 249.3 1211.8 250.9 1212.5 252.1 1215.2 255.4 1217.2 256.4 1218.6 256.3 1219.7 256.4"/>
</g></svg>
<!--/PLOT-->
</body></html>
